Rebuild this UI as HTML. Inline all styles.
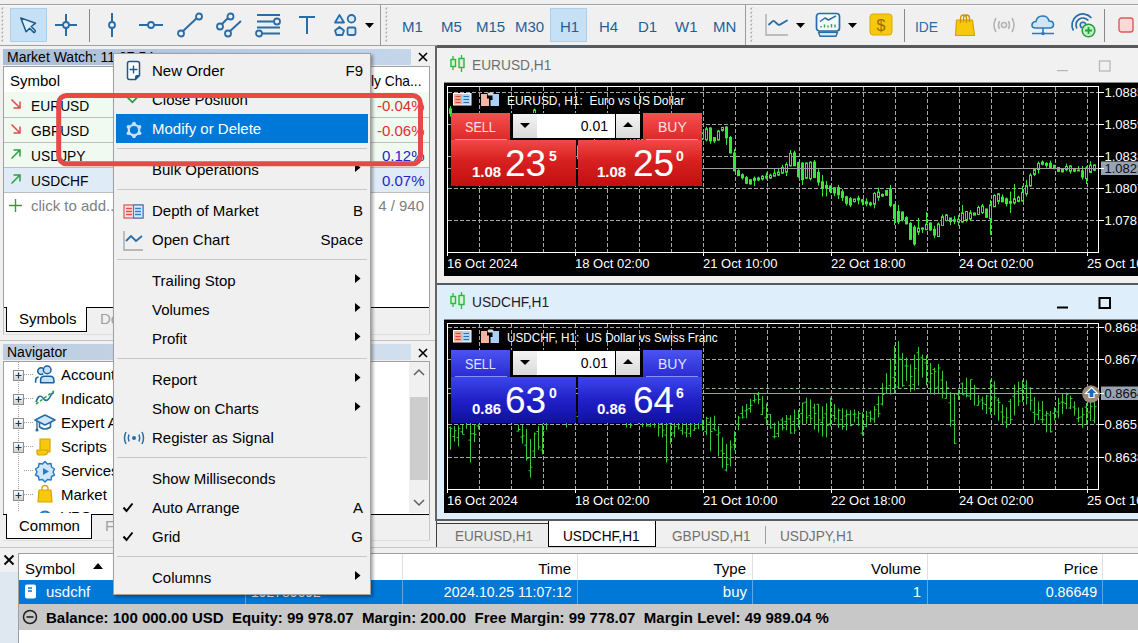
<!DOCTYPE html>
<html><head><meta charset="utf-8"><style>
html,body{margin:0;padding:0;width:1138px;height:643px;overflow:hidden;background:#f0f0f0;font-family:"Liberation Sans", sans-serif;}
.r{position:absolute;}
.t{position:absolute;white-space:nowrap;font-family:"Liberation Sans", sans-serif;}
svg.r{overflow:visible;}
</style></head><body>
<div class="r" style="left:0px;top:0px;width:1138px;height:46px;background:#f0f0f0"></div>
<div class="r" style="left:0px;top:4px;width:1138px;height:1px;background:#a0a0a0"></div>
<div class="r" style="left:0px;top:5px;width:1138px;height:1px;background:#fafafa"></div>
<div class="r" style="left:0px;top:45px;width:437px;height:1px;background:#a0a0a0"></div>
<div class="r" style="left:437px;top:45px;width:701px;height:2px;background:#5a5a5a"></div>
<svg class="r" style="left:1px;top:7px;" width="3" height="36" viewBox="0 0 3 36"><rect x="0.5" y="1" width="1.5" height="1.5" fill="#a8a8a8"/><rect x="1.5" y="0" width="1" height="1" fill="#c8c8c8"/><rect x="0.5" y="5" width="1.5" height="1.5" fill="#a8a8a8"/><rect x="1.5" y="4" width="1" height="1" fill="#c8c8c8"/><rect x="0.5" y="9" width="1.5" height="1.5" fill="#a8a8a8"/><rect x="1.5" y="8" width="1" height="1" fill="#c8c8c8"/><rect x="0.5" y="13" width="1.5" height="1.5" fill="#a8a8a8"/><rect x="1.5" y="12" width="1" height="1" fill="#c8c8c8"/><rect x="0.5" y="17" width="1.5" height="1.5" fill="#a8a8a8"/><rect x="1.5" y="16" width="1" height="1" fill="#c8c8c8"/><rect x="0.5" y="21" width="1.5" height="1.5" fill="#a8a8a8"/><rect x="1.5" y="20" width="1" height="1" fill="#c8c8c8"/><rect x="0.5" y="25" width="1.5" height="1.5" fill="#a8a8a8"/><rect x="1.5" y="24" width="1" height="1" fill="#c8c8c8"/><rect x="0.5" y="29" width="1.5" height="1.5" fill="#a8a8a8"/><rect x="1.5" y="28" width="1" height="1" fill="#c8c8c8"/><rect x="0.5" y="33" width="1.5" height="1.5" fill="#a8a8a8"/><rect x="1.5" y="32" width="1" height="1" fill="#c8c8c8"/></svg>
<svg class="r" style="left:385px;top:7px;" width="3" height="36" viewBox="0 0 3 36"><rect x="0.5" y="1" width="1.5" height="1.5" fill="#a8a8a8"/><rect x="1.5" y="0" width="1" height="1" fill="#c8c8c8"/><rect x="0.5" y="5" width="1.5" height="1.5" fill="#a8a8a8"/><rect x="1.5" y="4" width="1" height="1" fill="#c8c8c8"/><rect x="0.5" y="9" width="1.5" height="1.5" fill="#a8a8a8"/><rect x="1.5" y="8" width="1" height="1" fill="#c8c8c8"/><rect x="0.5" y="13" width="1.5" height="1.5" fill="#a8a8a8"/><rect x="1.5" y="12" width="1" height="1" fill="#c8c8c8"/><rect x="0.5" y="17" width="1.5" height="1.5" fill="#a8a8a8"/><rect x="1.5" y="16" width="1" height="1" fill="#c8c8c8"/><rect x="0.5" y="21" width="1.5" height="1.5" fill="#a8a8a8"/><rect x="1.5" y="20" width="1" height="1" fill="#c8c8c8"/><rect x="0.5" y="25" width="1.5" height="1.5" fill="#a8a8a8"/><rect x="1.5" y="24" width="1" height="1" fill="#c8c8c8"/><rect x="0.5" y="29" width="1.5" height="1.5" fill="#a8a8a8"/><rect x="1.5" y="28" width="1" height="1" fill="#c8c8c8"/><rect x="0.5" y="33" width="1.5" height="1.5" fill="#a8a8a8"/><rect x="1.5" y="32" width="1" height="1" fill="#c8c8c8"/></svg>
<svg class="r" style="left:750px;top:7px;" width="3" height="36" viewBox="0 0 3 36"><rect x="0.5" y="1" width="1.5" height="1.5" fill="#a8a8a8"/><rect x="1.5" y="0" width="1" height="1" fill="#c8c8c8"/><rect x="0.5" y="5" width="1.5" height="1.5" fill="#a8a8a8"/><rect x="1.5" y="4" width="1" height="1" fill="#c8c8c8"/><rect x="0.5" y="9" width="1.5" height="1.5" fill="#a8a8a8"/><rect x="1.5" y="8" width="1" height="1" fill="#c8c8c8"/><rect x="0.5" y="13" width="1.5" height="1.5" fill="#a8a8a8"/><rect x="1.5" y="12" width="1" height="1" fill="#c8c8c8"/><rect x="0.5" y="17" width="1.5" height="1.5" fill="#a8a8a8"/><rect x="1.5" y="16" width="1" height="1" fill="#c8c8c8"/><rect x="0.5" y="21" width="1.5" height="1.5" fill="#a8a8a8"/><rect x="1.5" y="20" width="1" height="1" fill="#c8c8c8"/><rect x="0.5" y="25" width="1.5" height="1.5" fill="#a8a8a8"/><rect x="1.5" y="24" width="1" height="1" fill="#c8c8c8"/><rect x="0.5" y="29" width="1.5" height="1.5" fill="#a8a8a8"/><rect x="1.5" y="28" width="1" height="1" fill="#c8c8c8"/><rect x="0.5" y="33" width="1.5" height="1.5" fill="#a8a8a8"/><rect x="1.5" y="32" width="1" height="1" fill="#c8c8c8"/></svg>
<div class="r" style="left:10px;top:8px;width:37px;height:34px;background:#c6e0f6;border:1px solid #a8d0f0;box-sizing:border-box"></div>
<svg class="r" style="left:18px;top:14px;" width="22" height="22" viewBox="0 0 22 22"><path d="M2.8 3.9 L17.5 9.2 L13.3 12.5 L17.2 16.6 Q17.6 17.2 17 17.8 L16.4 18.3 Q15.9 18.6 15.4 18.1 L11.7 14.3 L8.1 17.8 Z" fill="#d8f0ff" stroke="#1e5888" stroke-width="1.5" stroke-linejoin="round"/></svg>
<svg class="r" style="left:54px;top:13px;" width="24" height="24" viewBox="0 0 24 24"><path d="M12 1 V9 M12 15 V23 M1 12 H9 M15 12 H23" stroke="#2a6ca6" stroke-width="2"/><circle cx="12" cy="12" r="3" fill="#d8ecfb" stroke="#2a6ca6" stroke-width="1.8"/></svg>
<div class="r" style="left:89px;top:9px;width:1px;height:33px;background:#888"></div>
<svg class="r" style="left:104px;top:12px;" width="16" height="26" viewBox="0 0 16 26"><path d="M8 1 V25" stroke="#2a6ca6" stroke-width="2"/><circle cx="8" cy="13" r="3" fill="#e8f2fb" stroke="#2a6ca6" stroke-width="1.8"/></svg>
<svg class="r" style="left:138px;top:17px;" width="26" height="16" viewBox="0 0 26 16"><path d="M1 8 H25" stroke="#2a6ca6" stroke-width="2"/><circle cx="13" cy="8" r="3" fill="#e8f2fb" stroke="#2a6ca6" stroke-width="1.8"/></svg>
<svg class="r" style="left:176px;top:11px;" width="28" height="28" viewBox="0 0 28 28"><path d="M5 22 L23 5" stroke="#2a6ca6" stroke-width="2"/><circle cx="5" cy="22.5" r="3" fill="#e8f2fb" stroke="#2a6ca6" stroke-width="1.8"/><circle cx="23" cy="5.5" r="3" fill="#e8f2fb" stroke="#2a6ca6" stroke-width="1.8"/></svg>
<svg class="r" style="left:214px;top:11px;" width="30" height="28" viewBox="0 0 30 28"><path d="M6 15 L16 5 M14 22 L27 10" stroke="#2a6ca6" stroke-width="2"/><circle cx="6" cy="15.5" r="3" fill="#e8f2fb" stroke="#2a6ca6" stroke-width="1.8"/><circle cx="16.5" cy="5.5" r="3" fill="#e8f2fb" stroke="#2a6ca6" stroke-width="1.8"/><circle cx="14" cy="22.5" r="3" fill="#e8f2fb" stroke="#2a6ca6" stroke-width="1.8"/></svg>
<svg class="r" style="left:254px;top:11px;" width="30" height="28" viewBox="0 0 30 28"><path d="M3 4 H26 M3 10.5 H22 M3 16.5 H26 M8 22.5 H26" stroke="#2a6ca6" stroke-width="2"/><circle cx="23" cy="10.5" r="3" fill="#e8f2fb" stroke="#2a6ca6" stroke-width="1.8"/><circle cx="5" cy="22.5" r="3" fill="#e8f2fb" stroke="#2a6ca6" stroke-width="1.8"/></svg>
<svg class="r" style="left:297px;top:14px;" width="20" height="22" viewBox="0 0 20 22"><path d="M2 3 H18 M10 3 V20" stroke="#2a6ca6" stroke-width="2"/></svg>
<svg class="r" style="left:332px;top:12px;" width="28" height="26" viewBox="0 0 28 26"><path d="M7.5 3 L12 10.5 H3 Z" fill="#d8ecfb" stroke="#2a6ca6" stroke-width="1.8" stroke-linejoin="round"/><circle cx="19.5" cy="6.8" r="3.8" fill="#d8ecfb" stroke="#2a6ca6" stroke-width="1.8"/><path d="M7.5 15 L12 18.5 L10.5 23 H4.5 L3 18.5 Z" fill="#d8ecfb" stroke="#2a6ca6" stroke-width="1.8" stroke-linejoin="round"/><rect x="15.5" y="15.5" width="8" height="7.5" rx="1.5" fill="#d8ecfb" stroke="#2a6ca6" stroke-width="1.8"/></svg>
<svg class="r" style="left:365px;top:23px;" width="10" height="6" viewBox="0 0 10 6"><path d="M0 0 H9 L4.5 5 Z" fill="#000"/></svg>
<div class="r" style="left:380px;top:5px;width:1px;height:40px;background:#9a9a9a"></div>
<div class="r" style="left:550px;top:8px;width:37px;height:34px;background:#c6e0f6;border:1px solid #a8d0f0;box-sizing:border-box"></div>
<div class="t" style="left:402px;top:19.00px;font-size:15px;line-height:15px;color:#1f5f99;font-weight:normal;">M1</div>
<div class="t" style="left:441px;top:19.00px;font-size:15px;line-height:15px;color:#1f5f99;font-weight:normal;">M5</div>
<div class="t" style="left:476px;top:19.00px;font-size:15px;line-height:15px;color:#1f5f99;font-weight:normal;">M15</div>
<div class="t" style="left:515px;top:19.00px;font-size:15px;line-height:15px;color:#1f5f99;font-weight:normal;">M30</div>
<div class="t" style="left:560px;top:19.00px;font-size:15px;line-height:15px;color:#1f5f99;font-weight:normal;">H1</div>
<div class="t" style="left:599px;top:19.00px;font-size:15px;line-height:15px;color:#1f5f99;font-weight:normal;">H4</div>
<div class="t" style="left:638px;top:19.00px;font-size:15px;line-height:15px;color:#1f5f99;font-weight:normal;">D1</div>
<div class="t" style="left:675px;top:19.00px;font-size:15px;line-height:15px;color:#1f5f99;font-weight:normal;">W1</div>
<div class="t" style="left:713px;top:19.00px;font-size:15px;line-height:15px;color:#1f5f99;font-weight:normal;">MN</div>
<div class="r" style="left:745px;top:5px;width:1px;height:40px;background:#9a9a9a"></div>
<svg class="r" style="left:764px;top:13px;" width="26" height="25" viewBox="0 0 26 25"><path d="M2 1 V22 H24" stroke="#bcbcbc" stroke-width="1.8" fill="none"/><path d="M5 11.5 L8.5 8.3 Q9.5 7.5 10.5 8.3 L14 11.5 Q15 12.3 16 11.6 L23 7.5" stroke="#2a6ca6" stroke-width="1.8" fill="none" stroke-linecap="round" stroke-linejoin="round"/></svg>
<svg class="r" style="left:796px;top:23px;" width="10" height="6" viewBox="0 0 10 6"><path d="M0 0 H9 L4.5 5 Z" fill="#000"/></svg>
<svg class="r" style="left:815px;top:12px;" width="27" height="26" viewBox="0 0 27 26"><rect x="1.5" y="1.5" width="23" height="17.5" rx="3" fill="#f2f8fd" stroke="#2a6ca6" stroke-width="1.7"/><path d="M5 9.5 L10 6 L13.5 8 L21 3.8" stroke="#2a6ca6" stroke-width="1.5" fill="none" stroke-linejoin="round"/><path d="M6 15.5 V14 M9.5 15.5 V12.5 M13 15.5 V13.5 M16.5 15.5 V12 M20 15.5 V12.5" stroke="#3aa04a" stroke-width="1.4"/><path d="M3.5 20.3 H22.5 L21 24.3 H5 Z" fill="#d4e8f8" stroke="#2a6ca6" stroke-width="1.4" stroke-linejoin="round"/></svg>
<svg class="r" style="left:848px;top:23px;" width="10" height="6" viewBox="0 0 10 6"><path d="M0 0 H9 L4.5 5 Z" fill="#000"/></svg>
<svg class="r" style="left:869px;top:13px;" width="24" height="23" viewBox="0 0 24 23"><rect x="1" y="1" width="22" height="21" rx="3" fill="#f6c80e" stroke="#e0a800" stroke-width="1"/><text x="12" y="17.5" font-family="Liberation Sans" font-size="16" text-anchor="middle" fill="#9a6a00">$</text></svg>
<div class="r" style="left:904px;top:9px;width:1px;height:33px;background:#888"></div>
<div class="t" style="left:915px;top:18.80px;font-size:15px;line-height:15px;color:#2a6ca6;font-weight:normal;transform:scaleX(0.92);transform-origin:0 0;">IDE</div>
<svg class="r" style="left:954px;top:13px;" width="24" height="24" viewBox="0 0 24 24"><path d="M2.5 7 H18.5 L20.5 22.5 H1.5 Z" fill="#f6c80e" stroke="#d8a200" stroke-width="1.2" stroke-linejoin="round"/><path d="M6.5 10 V5.5 Q6.5 2 9.5 2 Q12.5 2 12.5 5.5 V10 M9.5 9 V5.5 Q9.5 2 12.5 2 Q15.5 2 15.5 5.5 V9" stroke="#c89400" stroke-width="1.3" fill="none"/></svg>
<svg class="r" style="left:991px;top:16px;" width="26" height="18" viewBox="0 0 26 18"><path d="M5 2 Q1 9 5 16 M21 2 Q25 9 21 16 M8.5 5 Q6.5 9 8.5 13 M17.5 5 Q19.5 9 17.5 13" stroke="#b5b5b5" stroke-width="1.6" fill="none"/><circle cx="13" cy="9" r="2.5" fill="none" stroke="#b5b5b5" stroke-width="1.6"/></svg>
<svg class="r" style="left:1030px;top:14px;" width="26" height="22" viewBox="0 0 26 22"><path d="M6 14 Q1.5 14 2 10.5 Q2.5 7.5 6 7.5 Q7 2 12.5 2 Q18 2 19 7 Q23.5 7 23.5 10.5 Q23.5 14 19.5 14 Z" fill="#cfe6f8" stroke="#2a7ac0" stroke-width="1.6"/><path d="M13 14 V18.5 M2 19.5 H24" stroke="#2a7ac0" stroke-width="1.6"/><circle cx="13" cy="19.5" r="1.8" fill="#2a7ac0"/></svg>
<svg class="r" style="left:1069px;top:12px;" width="28" height="26" viewBox="0 0 28 26"><path d="M4.47 18.50 A11 11 0 0 1 22.43 5.93 M7.94 16.50 A7 7 0 0 1 19.36 8.50" stroke="#2a6ca6" stroke-width="1.7" fill="none"/><circle cx="14" cy="13" r="2.8" fill="#cfe6f8" stroke="#2a6ca6" stroke-width="1.5"/><circle cx="19.5" cy="18.5" r="6.3" fill="#c8f0c8" stroke="#22a03a" stroke-width="1.6"/><path d="M19.5 15 V22 M16 18.5 H23" stroke="#22a03a" stroke-width="1.8"/></svg>
<div class="r" style="left:1104px;top:9px;width:1px;height:33px;background:#888"></div>
<svg class="r" style="left:1118px;top:17px;" width="16" height="16" viewBox="0 0 16 16"><rect x="1" y="1" width="14" height="14" rx="2.5" fill="#fcd8d8" stroke="#e05a5a" stroke-width="1.4"/></svg>
<div class="r" style="left:0px;top:46px;width:437px;height:502px;background:#f0f0f0"></div>
<div class="r" style="left:3px;top:49px;width:408px;height:16px;background:linear-gradient(90deg,#a9bdd6,#c3d6ec)"></div>
<div class="t" style="left:7px;top:50.15px;font-size:14px;line-height:14px;color:#000;font-weight:normal;">Market Watch: 11:07:54</div>
<svg class="r" style="left:418px;top:52px;" width="10" height="10" viewBox="0 0 10 10"><path d="M1 1 L9 9 M9 1 L1 9" stroke="#000" stroke-width="1.6"/></svg>
<div class="r" style="left:3px;top:66px;width:427px;height:242px;background:#fff;border:1px solid #a0a0a0;box-sizing:border-box"></div>
<div class="t" style="left:10px;top:73.30px;font-size:15px;line-height:15px;color:#000;font-weight:normal;">Symbol</div>
<div class="t" style="right:716px;top:73.30px;font-size:15px;line-height:15px;color:#000;font-weight:normal;transform:scaleX(0.92);transform-origin:100% 0;">Daily Cha...</div>
<div class="r" style="left:4px;top:92px;width:425px;height:25px;background:#f0faf0"></div>
<svg class="r" style="left:10px;top:98px;" width="13" height="12" viewBox="0 0 13 12"><path d="M1.5 1.5 L10 10 M3.5 10 H10 V3.5" stroke="#e04a4a" stroke-width="1.5" fill="none"/></svg>
<div class="t" style="left:31px;top:98.30px;font-size:15px;line-height:15px;color:#000;font-weight:normal;transform:scaleX(0.92);transform-origin:0 0;">EURUSD</div>
<div class="t" style="right:713.5px;top:98.30px;font-size:15px;line-height:15px;color:#dc3030;font-weight:normal;">-0.04%</div>
<div class="r" style="left:4px;top:117px;width:425px;height:25px;background:#f0faf0"></div>
<svg class="r" style="left:10px;top:123px;" width="13" height="12" viewBox="0 0 13 12"><path d="M1.5 1.5 L10 10 M3.5 10 H10 V3.5" stroke="#e04a4a" stroke-width="1.5" fill="none"/></svg>
<div class="t" style="left:31px;top:123.30px;font-size:15px;line-height:15px;color:#000;font-weight:normal;transform:scaleX(0.92);transform-origin:0 0;">GBPUSD</div>
<div class="t" style="right:713.5px;top:123.30px;font-size:15px;line-height:15px;color:#dc3030;font-weight:normal;">-0.06%</div>
<div class="r" style="left:4px;top:142px;width:425px;height:25px;background:#f0faf0"></div>
<svg class="r" style="left:10px;top:148px;" width="13" height="12" viewBox="0 0 13 12"><path d="M1.5 10.5 L10 2 M3.5 2 H10 V8.5" stroke="#2aa040" stroke-width="1.5" fill="none"/></svg>
<div class="t" style="left:31px;top:148.30px;font-size:15px;line-height:15px;color:#000;font-weight:normal;transform:scaleX(0.92);transform-origin:0 0;">USDJPY</div>
<div class="t" style="right:713.5px;top:148.30px;font-size:15px;line-height:15px;color:#2424c8;font-weight:normal;">0.12%</div>
<div class="r" style="left:4px;top:167px;width:425px;height:25px;background:#e0ebf8"></div>
<svg class="r" style="left:10px;top:173px;" width="13" height="12" viewBox="0 0 13 12"><path d="M1.5 10.5 L10 2 M3.5 2 H10 V8.5" stroke="#2aa040" stroke-width="1.5" fill="none"/></svg>
<div class="t" style="left:31px;top:173.30px;font-size:15px;line-height:15px;color:#000;font-weight:normal;transform:scaleX(0.92);transform-origin:0 0;">USDCHF</div>
<div class="t" style="right:713.5px;top:173.30px;font-size:15px;line-height:15px;color:#2424c8;font-weight:normal;">0.07%</div>
<div class="r" style="left:4px;top:117px;width:425px;height:1px;background:#bdbdbd"></div>
<div class="r" style="left:4px;top:142px;width:425px;height:1px;background:#bdbdbd"></div>
<div class="r" style="left:4px;top:167px;width:425px;height:1px;background:#bdbdbd"></div>
<div class="r" style="left:4px;top:192px;width:425px;height:1px;background:#bdbdbd"></div>
<svg class="r" style="left:8px;top:198px;" width="15" height="15" viewBox="0 0 15 15"><path d="M7.5 1 V14 M1 7.5 H14" stroke="#2aa040" stroke-width="1.4"/></svg>
<div class="t" style="left:31px;top:198.30px;font-size:15px;line-height:15px;color:#808080;font-weight:normal;">click to add...</div>
<div class="t" style="right:714px;top:198.30px;font-size:15px;line-height:15px;color:#808080;font-weight:normal;">4 / 940</div>
<div class="r" style="left:3px;top:307px;width:427px;height:1px;background:#000"></div>
<div class="r" style="left:6px;top:307px;width:81px;height:25px;background:#fff;border:1px solid #000;border-top:none;box-sizing:border-box"></div>
<div class="t" style="left:19px;top:311.30px;font-size:15px;line-height:15px;color:#000;font-weight:normal;">Symbols</div>
<div class="t" style="left:100px;top:311.30px;font-size:15px;line-height:15px;color:#a0a0a0;font-weight:normal;">Details</div>
<div class="r" style="left:3px;top:307px;width:1px;height:28px;background:#c0c0c0"></div>
<div class="r" style="left:429px;top:307px;width:1px;height:28px;background:#c8c8c8"></div>
<div class="r" style="left:3px;top:334px;width:427px;height:1px;background:#dedede"></div>
<div class="r" style="left:0px;top:340px;width:435px;height:1px;background:#c4c4c4"></div>
<div class="r" style="left:3px;top:344px;width:408px;height:16px;background:linear-gradient(90deg,#bccde0,#d2dfee)"></div>
<div class="t" style="left:7px;top:345.15px;font-size:14px;line-height:14px;color:#000;font-weight:normal;">Navigator</div>
<svg class="r" style="left:418px;top:348px;" width="10" height="10" viewBox="0 0 10 10"><path d="M1 1 L9 9 M9 1 L1 9" stroke="#000" stroke-width="1.6"/></svg>
<div class="r" style="left:3px;top:361px;width:427px;height:153px;background:#fff;border:1px solid #a0a0a0;border-bottom:none;box-sizing:border-box"></div>
<div class="r" style="left:409px;top:362px;width:20px;height:151px;background:#f0f0f0"></div>
<div class="r" style="left:410px;top:397px;width:18px;height:83px;background:#cdcdcd"></div>
<svg class="r" style="left:413px;top:368px;" width="12" height="8" viewBox="0 0 12 8"><path d="M1 7 L6 2 L11 7" stroke="#606060" stroke-width="1.5" fill="none"/></svg>
<svg class="r" style="left:413px;top:499px;" width="12" height="8" viewBox="0 0 12 8"><path d="M1 1 L6 6 L11 1" stroke="#606060" stroke-width="1.5" fill="none"/></svg>
<svg class="r" style="left:13px;top:362px;" width="40" height="150" viewBox="0 0 40 150"><rect x="5" y="0" width="1" height="1" fill="#a0a0a0"/><rect x="5" y="2" width="1" height="1" fill="#a0a0a0"/><rect x="5" y="4" width="1" height="1" fill="#a0a0a0"/><rect x="5" y="6" width="1" height="1" fill="#a0a0a0"/><rect x="5" y="8" width="1" height="1" fill="#a0a0a0"/><rect x="5" y="10" width="1" height="1" fill="#a0a0a0"/><rect x="5" y="12" width="1" height="1" fill="#a0a0a0"/><rect x="5" y="14" width="1" height="1" fill="#a0a0a0"/><rect x="5" y="16" width="1" height="1" fill="#a0a0a0"/><rect x="5" y="18" width="1" height="1" fill="#a0a0a0"/><rect x="5" y="20" width="1" height="1" fill="#a0a0a0"/><rect x="5" y="22" width="1" height="1" fill="#a0a0a0"/><rect x="5" y="24" width="1" height="1" fill="#a0a0a0"/><rect x="5" y="26" width="1" height="1" fill="#a0a0a0"/><rect x="5" y="28" width="1" height="1" fill="#a0a0a0"/><rect x="5" y="30" width="1" height="1" fill="#a0a0a0"/><rect x="5" y="32" width="1" height="1" fill="#a0a0a0"/><rect x="5" y="34" width="1" height="1" fill="#a0a0a0"/><rect x="5" y="36" width="1" height="1" fill="#a0a0a0"/><rect x="5" y="38" width="1" height="1" fill="#a0a0a0"/><rect x="5" y="40" width="1" height="1" fill="#a0a0a0"/><rect x="5" y="42" width="1" height="1" fill="#a0a0a0"/><rect x="5" y="44" width="1" height="1" fill="#a0a0a0"/><rect x="5" y="46" width="1" height="1" fill="#a0a0a0"/><rect x="5" y="48" width="1" height="1" fill="#a0a0a0"/><rect x="5" y="50" width="1" height="1" fill="#a0a0a0"/><rect x="5" y="52" width="1" height="1" fill="#a0a0a0"/><rect x="5" y="54" width="1" height="1" fill="#a0a0a0"/><rect x="5" y="56" width="1" height="1" fill="#a0a0a0"/><rect x="5" y="58" width="1" height="1" fill="#a0a0a0"/><rect x="5" y="60" width="1" height="1" fill="#a0a0a0"/><rect x="5" y="62" width="1" height="1" fill="#a0a0a0"/><rect x="5" y="64" width="1" height="1" fill="#a0a0a0"/><rect x="5" y="66" width="1" height="1" fill="#a0a0a0"/><rect x="5" y="68" width="1" height="1" fill="#a0a0a0"/><rect x="5" y="70" width="1" height="1" fill="#a0a0a0"/><rect x="5" y="72" width="1" height="1" fill="#a0a0a0"/><rect x="5" y="74" width="1" height="1" fill="#a0a0a0"/><rect x="5" y="76" width="1" height="1" fill="#a0a0a0"/><rect x="5" y="78" width="1" height="1" fill="#a0a0a0"/><rect x="5" y="80" width="1" height="1" fill="#a0a0a0"/><rect x="5" y="82" width="1" height="1" fill="#a0a0a0"/><rect x="5" y="84" width="1" height="1" fill="#a0a0a0"/><rect x="5" y="86" width="1" height="1" fill="#a0a0a0"/><rect x="5" y="88" width="1" height="1" fill="#a0a0a0"/><rect x="5" y="90" width="1" height="1" fill="#a0a0a0"/><rect x="5" y="92" width="1" height="1" fill="#a0a0a0"/><rect x="5" y="94" width="1" height="1" fill="#a0a0a0"/><rect x="5" y="96" width="1" height="1" fill="#a0a0a0"/><rect x="5" y="98" width="1" height="1" fill="#a0a0a0"/><rect x="5" y="100" width="1" height="1" fill="#a0a0a0"/><rect x="5" y="102" width="1" height="1" fill="#a0a0a0"/><rect x="5" y="104" width="1" height="1" fill="#a0a0a0"/><rect x="5" y="106" width="1" height="1" fill="#a0a0a0"/><rect x="5" y="108" width="1" height="1" fill="#a0a0a0"/><rect x="5" y="110" width="1" height="1" fill="#a0a0a0"/><rect x="5" y="112" width="1" height="1" fill="#a0a0a0"/><rect x="5" y="114" width="1" height="1" fill="#a0a0a0"/><rect x="5" y="116" width="1" height="1" fill="#a0a0a0"/><rect x="5" y="118" width="1" height="1" fill="#a0a0a0"/><rect x="5" y="120" width="1" height="1" fill="#a0a0a0"/><rect x="5" y="122" width="1" height="1" fill="#a0a0a0"/><rect x="5" y="124" width="1" height="1" fill="#a0a0a0"/><rect x="5" y="126" width="1" height="1" fill="#a0a0a0"/><rect x="5" y="128" width="1" height="1" fill="#a0a0a0"/><rect x="5" y="130" width="1" height="1" fill="#a0a0a0"/><rect x="5" y="132" width="1" height="1" fill="#a0a0a0"/><rect x="5" y="134" width="1" height="1" fill="#a0a0a0"/><rect x="5" y="136" width="1" height="1" fill="#a0a0a0"/><rect x="5" y="138" width="1" height="1" fill="#a0a0a0"/><rect x="5" y="140" width="1" height="1" fill="#a0a0a0"/><rect x="5" y="142" width="1" height="1" fill="#a0a0a0"/><rect x="5" y="144" width="1" height="1" fill="#a0a0a0"/><rect x="5" y="146" width="1" height="1" fill="#a0a0a0"/><rect x="5" y="148" width="1" height="1" fill="#a0a0a0"/></svg>
<div class="r" style="left:13px;top:369.5px;width:11px;height:11px;background:linear-gradient(180deg,#fafafa,#d4d4d4);border:1px solid #8c8c8c;box-sizing:border-box"></div>
<svg class="r" style="left:13px;top:369.5px;" width="11" height="11" viewBox="0 0 11 11"><path d="M2.5 5.5 H8.5 M5.5 2.5 V8.5" stroke="#1a3a6a" stroke-width="1.2"/></svg>
<svg class="r" style="left:24px;top:374px;" width="10" height="1" viewBox="0 0 10 1"><rect x="0" y="0" width="1" height="1" fill="#a0a0a0"/><rect x="2" y="0" width="1" height="1" fill="#a0a0a0"/><rect x="4" y="0" width="1" height="1" fill="#a0a0a0"/><rect x="6" y="0" width="1" height="1" fill="#a0a0a0"/><rect x="8" y="0" width="1" height="1" fill="#a0a0a0"/></svg>
<div class="t" style="left:61px;top:367.30px;font-size:15px;line-height:15px;color:#000;font-weight:normal;">Accounts</div>
<div class="r" style="left:13px;top:393.5px;width:11px;height:11px;background:linear-gradient(180deg,#fafafa,#d4d4d4);border:1px solid #8c8c8c;box-sizing:border-box"></div>
<svg class="r" style="left:13px;top:393.5px;" width="11" height="11" viewBox="0 0 11 11"><path d="M2.5 5.5 H8.5 M5.5 2.5 V8.5" stroke="#1a3a6a" stroke-width="1.2"/></svg>
<svg class="r" style="left:24px;top:398px;" width="10" height="1" viewBox="0 0 10 1"><rect x="0" y="0" width="1" height="1" fill="#a0a0a0"/><rect x="2" y="0" width="1" height="1" fill="#a0a0a0"/><rect x="4" y="0" width="1" height="1" fill="#a0a0a0"/><rect x="6" y="0" width="1" height="1" fill="#a0a0a0"/><rect x="8" y="0" width="1" height="1" fill="#a0a0a0"/></svg>
<div class="t" style="left:61px;top:391.30px;font-size:15px;line-height:15px;color:#000;font-weight:normal;">Indicators</div>
<div class="r" style="left:13px;top:417.5px;width:11px;height:11px;background:linear-gradient(180deg,#fafafa,#d4d4d4);border:1px solid #8c8c8c;box-sizing:border-box"></div>
<svg class="r" style="left:13px;top:417.5px;" width="11" height="11" viewBox="0 0 11 11"><path d="M2.5 5.5 H8.5 M5.5 2.5 V8.5" stroke="#1a3a6a" stroke-width="1.2"/></svg>
<svg class="r" style="left:24px;top:422px;" width="10" height="1" viewBox="0 0 10 1"><rect x="0" y="0" width="1" height="1" fill="#a0a0a0"/><rect x="2" y="0" width="1" height="1" fill="#a0a0a0"/><rect x="4" y="0" width="1" height="1" fill="#a0a0a0"/><rect x="6" y="0" width="1" height="1" fill="#a0a0a0"/><rect x="8" y="0" width="1" height="1" fill="#a0a0a0"/></svg>
<div class="t" style="left:61px;top:415.30px;font-size:15px;line-height:15px;color:#000;font-weight:normal;">Expert Advisors</div>
<div class="r" style="left:13px;top:441.5px;width:11px;height:11px;background:linear-gradient(180deg,#fafafa,#d4d4d4);border:1px solid #8c8c8c;box-sizing:border-box"></div>
<svg class="r" style="left:13px;top:441.5px;" width="11" height="11" viewBox="0 0 11 11"><path d="M2.5 5.5 H8.5 M5.5 2.5 V8.5" stroke="#1a3a6a" stroke-width="1.2"/></svg>
<svg class="r" style="left:24px;top:446px;" width="10" height="1" viewBox="0 0 10 1"><rect x="0" y="0" width="1" height="1" fill="#a0a0a0"/><rect x="2" y="0" width="1" height="1" fill="#a0a0a0"/><rect x="4" y="0" width="1" height="1" fill="#a0a0a0"/><rect x="6" y="0" width="1" height="1" fill="#a0a0a0"/><rect x="8" y="0" width="1" height="1" fill="#a0a0a0"/></svg>
<div class="t" style="left:61px;top:439.30px;font-size:15px;line-height:15px;color:#000;font-weight:normal;">Scripts</div>
<svg class="r" style="left:24px;top:470px;" width="10" height="1" viewBox="0 0 10 1"><rect x="0" y="0" width="1" height="1" fill="#a0a0a0"/><rect x="2" y="0" width="1" height="1" fill="#a0a0a0"/><rect x="4" y="0" width="1" height="1" fill="#a0a0a0"/><rect x="6" y="0" width="1" height="1" fill="#a0a0a0"/><rect x="8" y="0" width="1" height="1" fill="#a0a0a0"/></svg>
<div class="t" style="left:61px;top:463.30px;font-size:15px;line-height:15px;color:#000;font-weight:normal;">Services</div>
<div class="r" style="left:13px;top:489.5px;width:11px;height:11px;background:linear-gradient(180deg,#fafafa,#d4d4d4);border:1px solid #8c8c8c;box-sizing:border-box"></div>
<svg class="r" style="left:13px;top:489.5px;" width="11" height="11" viewBox="0 0 11 11"><path d="M2.5 5.5 H8.5 M5.5 2.5 V8.5" stroke="#1a3a6a" stroke-width="1.2"/></svg>
<svg class="r" style="left:24px;top:494px;" width="10" height="1" viewBox="0 0 10 1"><rect x="0" y="0" width="1" height="1" fill="#a0a0a0"/><rect x="2" y="0" width="1" height="1" fill="#a0a0a0"/><rect x="4" y="0" width="1" height="1" fill="#a0a0a0"/><rect x="6" y="0" width="1" height="1" fill="#a0a0a0"/><rect x="8" y="0" width="1" height="1" fill="#a0a0a0"/></svg>
<div class="t" style="left:61px;top:487.30px;font-size:15px;line-height:15px;color:#000;font-weight:normal;">Market</div>
<div class="r" style="left:13px;top:513.5px;width:11px;height:11px;background:linear-gradient(180deg,#fafafa,#d4d4d4);border:1px solid #8c8c8c;box-sizing:border-box"></div>
<svg class="r" style="left:13px;top:513.5px;" width="11" height="11" viewBox="0 0 11 11"><path d="M2.5 5.5 H8.5 M5.5 2.5 V8.5" stroke="#1a3a6a" stroke-width="1.2"/></svg>
<svg class="r" style="left:24px;top:518px;" width="10" height="1" viewBox="0 0 10 1"><rect x="0" y="0" width="1" height="1" fill="#a0a0a0"/><rect x="2" y="0" width="1" height="1" fill="#a0a0a0"/><rect x="4" y="0" width="1" height="1" fill="#a0a0a0"/><rect x="6" y="0" width="1" height="1" fill="#a0a0a0"/><rect x="8" y="0" width="1" height="1" fill="#a0a0a0"/></svg>
<div class="t" style="left:61px;top:511.30px;font-size:15px;line-height:15px;color:#000;font-weight:normal;">VPS</div>
<svg class="r" style="left:34px;top:364px;" width="22" height="22" viewBox="0 0 22 22"><path d="M9.2 9.6 A3.3 3.3 0 1 1 9.6 5" fill="#c4e2fa" stroke="#1e5e98" stroke-width="1.5"/><path d="M1.6 18.8 V16.5 Q1.6 13.3 4.6 13" fill="none" stroke="#1e5e98" stroke-width="1.5"/><circle cx="13.2" cy="5.9" r="3.8" fill="#c4e2fa" stroke="#1e5e98" stroke-width="1.5"/><path d="M6.6 18.8 V16 Q6.6 12.2 10.5 12.2 H16 Q19.9 12.2 19.9 16 V18.8 Z" fill="#c4e2fa" stroke="#1e5e98" stroke-width="1.5" stroke-linejoin="round"/></svg>
<svg class="r" style="left:34px;top:389px;" width="22" height="18" viewBox="0 0 22 18"><path d="M2 13 Q5 4 9 9 Q13 15 17 6 Q18.5 3.5 20 4" stroke="#2a6ca6" stroke-width="1.6" fill="none"/><path d="M2 15 L20 2" stroke="#30b040" stroke-width="1.6" stroke-dasharray="3 2" fill="none"/></svg>
<svg class="r" style="left:34px;top:412px;" width="22" height="22" viewBox="0 0 22 22"><path d="M1 8 L11 3 L21 8 L11 13 Z" fill="#d0e7fa" stroke="#2a6ca6" stroke-width="1.6" stroke-linejoin="round"/><path d="M5.5 10 V15 Q11 19 16.5 15 V10" fill="none" stroke="#2a6ca6" stroke-width="1.6"/><path d="M3 9 V17" stroke="#2a6ca6" stroke-width="1.4"/><circle cx="3" cy="18" r="1.6" fill="#2a6ca6"/></svg>
<svg class="r" style="left:34px;top:436px;" width="22" height="22" viewBox="0 0 22 22"><path d="M6 3 H16 V16 H6 Z" fill="#f6c80e" stroke="#d9a400" stroke-width="1.2"/><path d="M3 14 H14 Q14 19 10 19 H5 Q3 19 3 16.5 Z" fill="#f6c80e" stroke="#d9a400" stroke-width="1.2"/></svg>
<svg class="r" style="left:34px;top:460px;" width="22" height="22" viewBox="0 0 22 22"><path d="M11 1.5 L13.5 4 L17 3.5 L17.5 7 L20.5 9 L19 12 L20.5 15 L17.5 16.5 L17 20 L13.5 19.5 L11 22 L8.5 19.5 L5 20 L4.5 16.5 L1.5 15 L3 12 L1.5 9 L4.5 7 L5 3.5 L8.5 4 Z" fill="#d0e7fa" stroke="#2a7ac0" stroke-width="1.5" stroke-linejoin="round"/><path d="M9 8 L15 11.5 L9 15 Z" fill="#2a7ac0"/></svg>
<svg class="r" style="left:36px;top:484px;" width="18" height="20" viewBox="0 0 18 20"><path d="M6 7 V4.5 Q6 1.5 9 1.5 Q12 1.5 12 4.5 V7" stroke="#d9a400" stroke-width="1.4" fill="none"/><path d="M3 6 H15 L16 18 H2 Z" fill="#f6c80e" stroke="#d9a400" stroke-width="1.2" stroke-linejoin="round"/></svg>
<svg class="r" style="left:34px;top:507px;overflow:hidden" width="22" height="6" viewBox="0 0 22 6"><path d="M4 9 Q11 0 18 9" stroke="#2a7ac0" stroke-width="1.8" fill="#d0e7fa"/></svg>
<div class="r" style="left:55px;top:500px;width:60px;height:13px;overflow:hidden"><div class="t" style="left:6px;top:9.3px;font-size:15px;line-height:15px;color:#000">VPS</div></div>
<div class="r" style="left:3px;top:514px;width:427px;height:1px;background:#000"></div>
<div class="r" style="left:6px;top:514px;width:86px;height:25px;background:#fff;border:1px solid #000;border-top:none;box-sizing:border-box"></div>
<div class="t" style="left:19px;top:518.30px;font-size:15px;line-height:15px;color:#000;font-weight:normal;">Common</div>
<div class="r" style="left:429px;top:514px;width:1px;height:27px;background:#c8c8c8"></div>
<div class="r" style="left:3px;top:540px;width:427px;height:1px;background:#dedede"></div>
<div class="t" style="left:105px;top:518.30px;font-size:15px;line-height:15px;color:#a0a0a0;font-weight:normal;">Favorites</div>
<div class="r" style="left:437px;top:46px;width:701px;height:502px;background:#f0f0f0"></div>
<div class="r" style="left:437px;top:47px;width:701px;height:36px;background:#f1f1f1"></div>
<div class="r" style="left:437px;top:46px;width:701px;height:2px;background:#545a5e"></div>
<div class="r" style="left:444px;top:82px;width:694px;height:1px;background:#80868a"></div>
<div class="r" style="left:437px;top:83px;width:7px;height:193px;background:#f1f1f1"></div>
<svg class="r" style="left:448px;top:54px;" width="20" height="20" viewBox="0 0 20 20"><path d="M5 2 V16 M13.5 1 V18" stroke="#2ab83a" stroke-width="1.3"/><rect x="3" y="5.5" width="4.5" height="7" fill="#d8f4d8" stroke="#2ab83a" stroke-width="1.4"/><rect x="11" y="4.5" width="5" height="9" fill="#d8f4d8" stroke="#2ab83a" stroke-width="1.4"/></svg>
<div class="t" style="left:472px;top:56.80px;font-size:15px;line-height:15px;color:#6e6e6e;font-weight:normal;transform:scaleX(0.915);transform-origin:0 0;">EURUSD,H1</div>
<svg class="r" style="left:1055px;top:66px;" width="14" height="6" viewBox="0 0 14 6"><path d="M2 4.6 H13" stroke="#b4b4b4" stroke-width="1.2"/></svg>
<svg class="r" style="left:1097px;top:59px;" width="15" height="14" viewBox="0 0 15 14"><rect x="2.5" y="2" width="10.5" height="10" fill="none" stroke="#b4b4b4" stroke-width="1.2"/></svg>
<div class="r" style="left:437px;top:276px;width:701px;height:7px;background:#f1f1f1"></div>
<svg class="r" style="left:444px;top:83px;" width="694" height="193" viewBox="0 0 694 193"><rect x="0" y="0" width="694" height="193" fill="#000"/><path d="M35.5 4V169" stroke="#a8a8a8" stroke-width="1" stroke-dasharray="4 2"/><path d="M67.5 4V169" stroke="#a8a8a8" stroke-width="1" stroke-dasharray="4 2"/><path d="M99.5 4V169" stroke="#a8a8a8" stroke-width="1" stroke-dasharray="4 2"/><path d="M131.5 4V169" stroke="#a8a8a8" stroke-width="1" stroke-dasharray="4 2"/><path d="M163.5 4V169" stroke="#a8a8a8" stroke-width="1" stroke-dasharray="4 2"/><path d="M195.5 4V169" stroke="#a8a8a8" stroke-width="1" stroke-dasharray="4 2"/><path d="M227.5 4V169" stroke="#a8a8a8" stroke-width="1" stroke-dasharray="4 2"/><path d="M259.5 4V169" stroke="#a8a8a8" stroke-width="1" stroke-dasharray="4 2"/><path d="M291.5 4V169" stroke="#a8a8a8" stroke-width="1" stroke-dasharray="4 2"/><path d="M323.5 4V169" stroke="#a8a8a8" stroke-width="1" stroke-dasharray="4 2"/><path d="M355.5 4V169" stroke="#a8a8a8" stroke-width="1" stroke-dasharray="4 2"/><path d="M387.5 4V169" stroke="#a8a8a8" stroke-width="1" stroke-dasharray="4 2"/><path d="M419.5 4V169" stroke="#a8a8a8" stroke-width="1" stroke-dasharray="4 2"/><path d="M451.5 4V169" stroke="#a8a8a8" stroke-width="1" stroke-dasharray="4 2"/><path d="M483.5 4V169" stroke="#a8a8a8" stroke-width="1" stroke-dasharray="4 2"/><path d="M515.5 4V169" stroke="#a8a8a8" stroke-width="1" stroke-dasharray="4 2"/><path d="M547.5 4V169" stroke="#a8a8a8" stroke-width="1" stroke-dasharray="4 2"/><path d="M579.5 4V169" stroke="#a8a8a8" stroke-width="1" stroke-dasharray="4 2"/><path d="M611.5 4V169" stroke="#a8a8a8" stroke-width="1" stroke-dasharray="4 2"/><path d="M643.5 4V169" stroke="#a8a8a8" stroke-width="1" stroke-dasharray="4 2"/><path d="M4 9.5H654" stroke="#a8a8a8" stroke-width="1" stroke-dasharray="4 2"/><path d="M4 41.5H654" stroke="#a8a8a8" stroke-width="1" stroke-dasharray="4 2"/><path d="M4 73.5H654" stroke="#a8a8a8" stroke-width="1" stroke-dasharray="4 2"/><path d="M4 105.5H654" stroke="#a8a8a8" stroke-width="1" stroke-dasharray="4 2"/><path d="M4 137.5H654" stroke="#a8a8a8" stroke-width="1" stroke-dasharray="4 2"/><path d="M6.5 23.0V33.6" stroke="#3ae83a" stroke-width="1"/><rect x="5.5" y="25.9" width="2" height="4.5" fill="#3ae83a" stroke="#3ae83a" stroke-width="1"/><path d="M10.5 66.9V83.7" stroke="#3ae83a" stroke-width="1"/><rect x="9.5" y="67.0" width="2" height="15.0" fill="#3ae83a" stroke="#3ae83a" stroke-width="1"/><path d="M14.5 64.6V82.1" stroke="#3ae83a" stroke-width="1"/><rect x="13.5" y="67.0" width="2" height="15.0" fill="#3ae83a" stroke="#3ae83a" stroke-width="1"/><path d="M18.5 66.8V82.9" stroke="#3ae83a" stroke-width="1"/><rect x="17.5" y="67.0" width="2" height="15.0" fill="#3ae83a" stroke="#3ae83a" stroke-width="1"/><path d="M22.5 65.8V84.0" stroke="#3ae83a" stroke-width="1"/><rect x="21.5" y="67.0" width="2" height="15.0" fill="#000" stroke="#3ae83a" stroke-width="1"/><path d="M26.5 64.6V82.0" stroke="#3ae83a" stroke-width="1"/><rect x="25.5" y="67.0" width="2" height="15.0" fill="#3ae83a" stroke="#3ae83a" stroke-width="1"/><path d="M30.5 66.3V87.3" stroke="#3ae83a" stroke-width="1"/><rect x="29.5" y="67.0" width="2" height="15.0" fill="#3ae83a" stroke="#3ae83a" stroke-width="1"/><path d="M34.5 66.5V82.1" stroke="#3ae83a" stroke-width="1"/><rect x="33.5" y="67.0" width="2" height="15.0" fill="#3ae83a" stroke="#3ae83a" stroke-width="1"/><path d="M38.5 65.0V82.8" stroke="#3ae83a" stroke-width="1"/><rect x="37.5" y="67.0" width="2" height="15.0" fill="#3ae83a" stroke="#3ae83a" stroke-width="1"/><path d="M42.5 66.5V82.3" stroke="#3ae83a" stroke-width="1"/><rect x="41.5" y="67.0" width="2" height="15.0" fill="#000" stroke="#3ae83a" stroke-width="1"/><path d="M46.5 64.6V83.0" stroke="#3ae83a" stroke-width="1"/><rect x="45.5" y="67.0" width="2" height="15.0" fill="#000" stroke="#3ae83a" stroke-width="1"/><path d="M50.5 66.8V83.5" stroke="#3ae83a" stroke-width="1"/><rect x="49.5" y="67.0" width="2" height="15.0" fill="#000" stroke="#3ae83a" stroke-width="1"/><path d="M54.5 66.9V82.4" stroke="#3ae83a" stroke-width="1"/><rect x="53.5" y="67.0" width="2" height="15.0" fill="#000" stroke="#3ae83a" stroke-width="1"/><path d="M58.5 64.0V83.1" stroke="#3ae83a" stroke-width="1"/><rect x="57.5" y="67.0" width="2" height="15.0" fill="#3ae83a" stroke="#3ae83a" stroke-width="1"/><path d="M62.5 62.6V82.2" stroke="#3ae83a" stroke-width="1"/><rect x="61.5" y="67.0" width="2" height="15.0" fill="#000" stroke="#3ae83a" stroke-width="1"/><path d="M66.5 65.3V85.1" stroke="#3ae83a" stroke-width="1"/><rect x="65.5" y="67.0" width="2" height="15.0" fill="#000" stroke="#3ae83a" stroke-width="1"/><path d="M70.5 64.9V82.9" stroke="#3ae83a" stroke-width="1"/><rect x="69.5" y="67.0" width="2" height="15.0" fill="#3ae83a" stroke="#3ae83a" stroke-width="1"/><path d="M74.5 66.1V83.6" stroke="#3ae83a" stroke-width="1"/><rect x="73.5" y="67.0" width="2" height="15.0" fill="#3ae83a" stroke="#3ae83a" stroke-width="1"/><path d="M78.5 63.9V84.9" stroke="#3ae83a" stroke-width="1"/><rect x="77.5" y="67.0" width="2" height="15.0" fill="#3ae83a" stroke="#3ae83a" stroke-width="1"/><path d="M82.5 66.5V82.3" stroke="#3ae83a" stroke-width="1"/><rect x="81.5" y="67.0" width="2" height="15.0" fill="#3ae83a" stroke="#3ae83a" stroke-width="1"/><path d="M86.5 66.8V85.9" stroke="#3ae83a" stroke-width="1"/><rect x="85.5" y="67.0" width="2" height="15.0" fill="#000" stroke="#3ae83a" stroke-width="1"/><path d="M90.5 25.6V31.9" stroke="#3ae83a" stroke-width="1"/><rect x="89.5" y="26.8" width="2" height="4.5" fill="#000" stroke="#3ae83a" stroke-width="1"/><path d="M94.5 58.0V75.8" stroke="#3ae83a" stroke-width="1"/><rect x="93.5" y="61.2" width="2" height="13.5" fill="#3ae83a" stroke="#3ae83a" stroke-width="1"/><path d="M98.5 65.7V83.3" stroke="#3ae83a" stroke-width="1"/><rect x="97.5" y="66.6" width="2" height="14.8" fill="#3ae83a" stroke="#3ae83a" stroke-width="1"/><path d="M102.5 63.8V81.8" stroke="#3ae83a" stroke-width="1"/><rect x="101.5" y="66.2" width="2" height="14.6" fill="#000" stroke="#3ae83a" stroke-width="1"/><path d="M106.5 65.3V82.8" stroke="#3ae83a" stroke-width="1"/><rect x="105.5" y="65.8" width="2" height="14.4" fill="#000" stroke="#3ae83a" stroke-width="1"/><path d="M110.5 63.4V81.1" stroke="#3ae83a" stroke-width="1"/><rect x="109.5" y="65.4" width="2" height="14.1" fill="#000" stroke="#3ae83a" stroke-width="1"/><path d="M114.5 64.3V79.0" stroke="#3ae83a" stroke-width="1"/><rect x="113.5" y="64.9" width="2" height="13.9" fill="#000" stroke="#3ae83a" stroke-width="1"/><path d="M118.5 62.7V84.2" stroke="#3ae83a" stroke-width="1"/><rect x="117.5" y="64.5" width="2" height="13.7" fill="#000" stroke="#3ae83a" stroke-width="1"/><path d="M122.5 62.3V78.8" stroke="#3ae83a" stroke-width="1"/><rect x="121.5" y="64.1" width="2" height="13.5" fill="#000" stroke="#3ae83a" stroke-width="1"/><path d="M126.5 62.4V79.2" stroke="#3ae83a" stroke-width="1"/><rect x="125.5" y="63.7" width="2" height="13.2" fill="#000" stroke="#3ae83a" stroke-width="1"/><path d="M130.5 59.5V76.7" stroke="#3ae83a" stroke-width="1"/><rect x="129.5" y="63.3" width="2" height="13.0" fill="#000" stroke="#3ae83a" stroke-width="1"/><path d="M134.5 58.6V76.7" stroke="#3ae83a" stroke-width="1"/><rect x="133.5" y="62.8" width="2" height="12.8" fill="#000" stroke="#3ae83a" stroke-width="1"/><path d="M138.5 62.1V77.6" stroke="#3ae83a" stroke-width="1"/><rect x="137.5" y="62.4" width="2" height="12.6" fill="#000" stroke="#3ae83a" stroke-width="1"/><path d="M142.5 59.2V75.2" stroke="#3ae83a" stroke-width="1"/><rect x="141.5" y="62.0" width="2" height="12.3" fill="#000" stroke="#3ae83a" stroke-width="1"/><path d="M146.5 59.9V74.1" stroke="#3ae83a" stroke-width="1"/><rect x="145.5" y="61.6" width="2" height="12.1" fill="#000" stroke="#3ae83a" stroke-width="1"/><path d="M150.5 55.9V74.7" stroke="#3ae83a" stroke-width="1"/><rect x="149.5" y="61.1" width="2" height="11.9" fill="#000" stroke="#3ae83a" stroke-width="1"/><path d="M154.5 56.9V72.5" stroke="#3ae83a" stroke-width="1"/><rect x="153.5" y="60.7" width="2" height="11.7" fill="#000" stroke="#3ae83a" stroke-width="1"/><path d="M158.5 58.3V75.9" stroke="#3ae83a" stroke-width="1"/><rect x="157.5" y="60.3" width="2" height="11.5" fill="#000" stroke="#3ae83a" stroke-width="1"/><path d="M162.5 59.6V75.1" stroke="#3ae83a" stroke-width="1"/><rect x="161.5" y="59.9" width="2" height="11.2" fill="#000" stroke="#3ae83a" stroke-width="1"/><path d="M166.5 56.6V70.8" stroke="#3ae83a" stroke-width="1"/><rect x="165.5" y="59.5" width="2" height="11.0" fill="#000" stroke="#3ae83a" stroke-width="1"/><path d="M170.5 58.4V70.1" stroke="#3ae83a" stroke-width="1"/><rect x="169.5" y="59.0" width="2" height="10.8" fill="#000" stroke="#3ae83a" stroke-width="1"/><path d="M174.5 56.6V71.2" stroke="#3ae83a" stroke-width="1"/><rect x="173.5" y="58.6" width="2" height="10.6" fill="#000" stroke="#3ae83a" stroke-width="1"/><path d="M178.5 57.4V71.0" stroke="#3ae83a" stroke-width="1"/><rect x="177.5" y="58.2" width="2" height="10.3" fill="#000" stroke="#3ae83a" stroke-width="1"/><path d="M182.5 55.7V68.1" stroke="#3ae83a" stroke-width="1"/><rect x="181.5" y="57.8" width="2" height="10.1" fill="#000" stroke="#3ae83a" stroke-width="1"/><path d="M186.5 55.8V69.5" stroke="#3ae83a" stroke-width="1"/><rect x="185.5" y="57.3" width="2" height="9.9" fill="#000" stroke="#3ae83a" stroke-width="1"/><path d="M190.5 54.8V68.7" stroke="#3ae83a" stroke-width="1"/><rect x="189.5" y="56.9" width="2" height="9.7" fill="#000" stroke="#3ae83a" stroke-width="1"/><path d="M194.5 56.0V66.1" stroke="#3ae83a" stroke-width="1"/><rect x="193.5" y="56.5" width="2" height="9.4" fill="#000" stroke="#3ae83a" stroke-width="1"/><path d="M198.5 55.9V66.6" stroke="#3ae83a" stroke-width="1"/><rect x="197.5" y="56.1" width="2" height="9.2" fill="#000" stroke="#3ae83a" stroke-width="1"/><path d="M202.5 51.9V66.9" stroke="#3ae83a" stroke-width="1"/><rect x="201.5" y="55.6" width="2" height="9.0" fill="#000" stroke="#3ae83a" stroke-width="1"/><path d="M206.5 54.0V67.7" stroke="#3ae83a" stroke-width="1"/><rect x="205.5" y="55.2" width="2" height="8.8" fill="#000" stroke="#3ae83a" stroke-width="1"/><path d="M210.5 54.1V64.9" stroke="#3ae83a" stroke-width="1"/><rect x="209.5" y="54.8" width="2" height="8.5" fill="#000" stroke="#3ae83a" stroke-width="1"/><path d="M214.5 52.6V65.5" stroke="#3ae83a" stroke-width="1"/><rect x="213.5" y="54.4" width="2" height="8.3" fill="#000" stroke="#3ae83a" stroke-width="1"/><path d="M218.5 53.6V62.3" stroke="#3ae83a" stroke-width="1"/><rect x="217.5" y="54.0" width="2" height="8.1" fill="#000" stroke="#3ae83a" stroke-width="1"/><path d="M222.5 49.9V61.7" stroke="#3ae83a" stroke-width="1"/><rect x="221.5" y="53.5" width="2" height="7.9" fill="#000" stroke="#3ae83a" stroke-width="1"/><path d="M226.5 53.1V61.8" stroke="#3ae83a" stroke-width="1"/><rect x="225.5" y="53.1" width="2" height="7.6" fill="#000" stroke="#3ae83a" stroke-width="1"/><path d="M230.5 51.3V61.5" stroke="#3ae83a" stroke-width="1"/><rect x="229.5" y="52.7" width="2" height="7.4" fill="#000" stroke="#3ae83a" stroke-width="1"/><path d="M234.5 51.1V60.0" stroke="#3ae83a" stroke-width="1"/><rect x="233.5" y="52.3" width="2" height="7.2" fill="#000" stroke="#3ae83a" stroke-width="1"/><path d="M238.5 50.5V59.1" stroke="#3ae83a" stroke-width="1"/><rect x="237.5" y="51.8" width="2" height="7.0" fill="#000" stroke="#3ae83a" stroke-width="1"/><path d="M242.5 50.9V61.6" stroke="#3ae83a" stroke-width="1"/><rect x="241.5" y="51.4" width="2" height="6.8" fill="#000" stroke="#3ae83a" stroke-width="1"/><path d="M246.5 49.1V58.1" stroke="#3ae83a" stroke-width="1"/><rect x="245.5" y="51.0" width="2" height="6.5" fill="#000" stroke="#3ae83a" stroke-width="1"/><path d="M250.5 50.1V57.0" stroke="#3ae83a" stroke-width="1"/><rect x="249.5" y="50.6" width="2" height="6.3" fill="#000" stroke="#3ae83a" stroke-width="1"/><path d="M254.5 48.4V57.7" stroke="#3ae83a" stroke-width="1"/><rect x="253.5" y="50.2" width="2" height="6.1" fill="#000" stroke="#3ae83a" stroke-width="1"/><path d="M258.5 49.6V57.0" stroke="#3ae83a" stroke-width="1"/><rect x="257.5" y="50.0" width="2" height="6.0" fill="#000" stroke="#3ae83a" stroke-width="1"/><path d="M262.5 43.7V58.4" stroke="#3ae83a" stroke-width="1"/><rect x="261.5" y="45.8" width="2" height="11.0" fill="#000" stroke="#3ae83a" stroke-width="1"/><path d="M266.5 44.2V60.8" stroke="#3ae83a" stroke-width="1"/><rect x="265.5" y="45.0" width="2" height="12.9" fill="#3ae83a" stroke="#3ae83a" stroke-width="1"/><path d="M270.5 54.4V60.0" stroke="#3ae83a" stroke-width="1"/><rect x="269.5" y="54.6" width="2" height="3.4" fill="#3ae83a" stroke="#3ae83a" stroke-width="1"/><path d="M274.5 46.9V57.3" stroke="#3ae83a" stroke-width="1"/><rect x="273.5" y="48.1" width="2" height="9.0" fill="#000" stroke="#3ae83a" stroke-width="1"/><path d="M278.5 44.1V48.7" stroke="#3ae83a" stroke-width="1"/><rect x="277.5" y="44.4" width="2" height="3.0" fill="#000" stroke="#3ae83a" stroke-width="1"/><path d="M282.5 43.1V62.0" stroke="#3ae83a" stroke-width="1"/><rect x="281.5" y="44.0" width="2" height="10.8" fill="#3ae83a" stroke="#3ae83a" stroke-width="1"/><path d="M286.5 53.0V70.4" stroke="#3ae83a" stroke-width="1"/><rect x="285.5" y="54.5" width="2" height="15.5" fill="#3ae83a" stroke="#3ae83a" stroke-width="1"/><path d="M290.5 66.1V88.4" stroke="#3ae83a" stroke-width="1"/><rect x="289.5" y="70.0" width="2" height="17.8" fill="#3ae83a" stroke="#3ae83a" stroke-width="1"/><path d="M294.5 86.2V92.8" stroke="#3ae83a" stroke-width="1"/><rect x="293.5" y="87.8" width="2" height="4.9" fill="#3ae83a" stroke="#3ae83a" stroke-width="1"/><path d="M298.5 90.4V96.5" stroke="#3ae83a" stroke-width="1"/><rect x="297.5" y="91.8" width="2" height="3.0" fill="#3ae83a" stroke="#3ae83a" stroke-width="1"/><path d="M302.5 92.9V101.1" stroke="#3ae83a" stroke-width="1"/><rect x="301.5" y="94.6" width="2" height="5.6" fill="#3ae83a" stroke="#3ae83a" stroke-width="1"/><path d="M306.5 96.2V101.6" stroke="#3ae83a" stroke-width="1"/><rect x="305.5" y="96.8" width="2" height="4.2" fill="#3ae83a" stroke="#3ae83a" stroke-width="1"/><path d="M310.5 93.5V103.0" stroke="#3ae83a" stroke-width="1"/><rect x="309.5" y="95.2" width="2" height="2.2" fill="#000" stroke="#3ae83a" stroke-width="1"/><path d="M314.5 93.7V98.3" stroke="#3ae83a" stroke-width="1"/><rect x="313.5" y="95.0" width="2" height="2.0" fill="#000" stroke="#3ae83a" stroke-width="1"/><path d="M318.5 92.1V97.6" stroke="#3ae83a" stroke-width="1"/><rect x="317.5" y="93.2" width="2" height="2.9" fill="#000" stroke="#3ae83a" stroke-width="1"/><path d="M322.5 89.6V96.5" stroke="#3ae83a" stroke-width="1"/><rect x="321.5" y="93.0" width="2" height="2.1" fill="#000" stroke="#3ae83a" stroke-width="1"/><path d="M326.5 90.7V95.8" stroke="#3ae83a" stroke-width="1"/><rect x="325.5" y="92.1" width="2" height="2.9" fill="#000" stroke="#3ae83a" stroke-width="1"/><path d="M330.5 85.7V93.5" stroke="#3ae83a" stroke-width="1"/><rect x="329.5" y="90.2" width="2" height="3.0" fill="#000" stroke="#3ae83a" stroke-width="1"/><path d="M334.5 85.2V93.1" stroke="#3ae83a" stroke-width="1"/><rect x="333.5" y="89.1" width="2" height="3.0" fill="#000" stroke="#3ae83a" stroke-width="1"/><path d="M338.5 81.8V90.9" stroke="#3ae83a" stroke-width="1"/><rect x="337.5" y="84.6" width="2" height="5.6" fill="#000" stroke="#3ae83a" stroke-width="1"/><path d="M342.5 79.3V93.0" stroke="#3ae83a" stroke-width="1"/><rect x="341.5" y="81.4" width="2" height="7.8" fill="#000" stroke="#3ae83a" stroke-width="1"/><path d="M346.5 67.0V83.4" stroke="#3ae83a" stroke-width="1"/><rect x="345.5" y="70.5" width="2" height="12.4" fill="#000" stroke="#3ae83a" stroke-width="1"/><path d="M350.5 67.7V83.0" stroke="#3ae83a" stroke-width="1"/><rect x="349.5" y="69.9" width="2" height="13.0" fill="#3ae83a" stroke="#3ae83a" stroke-width="1"/><path d="M354.5 78.8V94.7" stroke="#3ae83a" stroke-width="1"/><rect x="353.5" y="79.6" width="2" height="13.9" fill="#3ae83a" stroke="#3ae83a" stroke-width="1"/><path d="M358.5 79.1V102.0" stroke="#3ae83a" stroke-width="1"/><rect x="357.5" y="80.1" width="2" height="16.6" fill="#3ae83a" stroke="#3ae83a" stroke-width="1"/><path d="M362.5 79.6V96.2" stroke="#3ae83a" stroke-width="1"/><rect x="361.5" y="80.0" width="2" height="15.2" fill="#000" stroke="#3ae83a" stroke-width="1"/><path d="M366.5 78.3V97.4" stroke="#3ae83a" stroke-width="1"/><rect x="365.5" y="79.2" width="2" height="16.5" fill="#000" stroke="#3ae83a" stroke-width="1"/><path d="M370.5 77.0V94.6" stroke="#3ae83a" stroke-width="1"/><rect x="369.5" y="79.0" width="2" height="15.6" fill="#3ae83a" stroke="#3ae83a" stroke-width="1"/><path d="M374.5 86.1V102.6" stroke="#3ae83a" stroke-width="1"/><rect x="373.5" y="89.3" width="2" height="9.8" fill="#3ae83a" stroke="#3ae83a" stroke-width="1"/><path d="M378.5 92.0V113.5" stroke="#3ae83a" stroke-width="1"/><rect x="377.5" y="98.8" width="2" height="6.1" fill="#3ae83a" stroke="#3ae83a" stroke-width="1"/><path d="M382.5 98.0V113.5" stroke="#3ae83a" stroke-width="1"/><rect x="381.5" y="102.4" width="2" height="2.9" fill="#3ae83a" stroke="#3ae83a" stroke-width="1"/><path d="M386.5 102.6V110.4" stroke="#3ae83a" stroke-width="1"/><rect x="385.5" y="103.0" width="2" height="5.4" fill="#3ae83a" stroke="#3ae83a" stroke-width="1"/><path d="M390.5 104.0V113.1" stroke="#3ae83a" stroke-width="1"/><rect x="389.5" y="104.8" width="2" height="5.1" fill="#3ae83a" stroke="#3ae83a" stroke-width="1"/><path d="M394.5 101.9V116.1" stroke="#3ae83a" stroke-width="1"/><rect x="393.5" y="104.6" width="2" height="7.2" fill="#3ae83a" stroke="#3ae83a" stroke-width="1"/><path d="M398.5 106.2V118.1" stroke="#3ae83a" stroke-width="1"/><rect x="397.5" y="108.8" width="2" height="5.6" fill="#3ae83a" stroke="#3ae83a" stroke-width="1"/><path d="M402.5 112.8V122.6" stroke="#3ae83a" stroke-width="1"/><rect x="401.5" y="113.8" width="2" height="6.5" fill="#3ae83a" stroke="#3ae83a" stroke-width="1"/><path d="M406.5 114.1V124.0" stroke="#3ae83a" stroke-width="1"/><rect x="405.5" y="115.7" width="2" height="6.3" fill="#3ae83a" stroke="#3ae83a" stroke-width="1"/><path d="M410.5 115.9V119.5" stroke="#3ae83a" stroke-width="1"/><rect x="409.5" y="116.0" width="2" height="2.6" fill="#000" stroke="#3ae83a" stroke-width="1"/><path d="M414.5 112.8V121.4" stroke="#3ae83a" stroke-width="1"/><rect x="413.5" y="115.1" width="2" height="2.0" fill="#000" stroke="#3ae83a" stroke-width="1"/><path d="M418.5 115.9V122.4" stroke="#3ae83a" stroke-width="1"/><rect x="417.5" y="116.8" width="2" height="2.0" fill="#3ae83a" stroke="#3ae83a" stroke-width="1"/><path d="M422.5 115.3V123.2" stroke="#3ae83a" stroke-width="1"/><rect x="421.5" y="118.8" width="2" height="2.0" fill="#3ae83a" stroke="#3ae83a" stroke-width="1"/><path d="M426.5 118.5V123.4" stroke="#3ae83a" stroke-width="1"/><rect x="425.5" y="119.9" width="2" height="2.0" fill="#000" stroke="#3ae83a" stroke-width="1"/><path d="M430.5 109.2V125.4" stroke="#3ae83a" stroke-width="1"/><rect x="429.5" y="110.4" width="2" height="10.8" fill="#000" stroke="#3ae83a" stroke-width="1"/><path d="M434.5 104.7V117.8" stroke="#3ae83a" stroke-width="1"/><rect x="433.5" y="109.0" width="2" height="5.4" fill="#000" stroke="#3ae83a" stroke-width="1"/><path d="M438.5 110.5V113.9" stroke="#3ae83a" stroke-width="1"/><rect x="437.5" y="111.4" width="2" height="1.7" fill="#000" stroke="#3ae83a" stroke-width="1"/><path d="M442.5 107.0V112.6" stroke="#3ae83a" stroke-width="1"/><rect x="441.5" y="107.5" width="2" height="4.8" fill="#3ae83a" stroke="#3ae83a" stroke-width="1"/><path d="M446.5 102.0V124.2" stroke="#3ae83a" stroke-width="1"/><rect x="445.5" y="106.0" width="2" height="16.3" fill="#3ae83a" stroke="#3ae83a" stroke-width="1"/><path d="M450.5 120.8V142.0" stroke="#3ae83a" stroke-width="1"/><rect x="449.5" y="121.8" width="2" height="13.6" fill="#3ae83a" stroke="#3ae83a" stroke-width="1"/><path d="M454.5 122.0V141.3" stroke="#3ae83a" stroke-width="1"/><rect x="453.5" y="128.4" width="2" height="10.4" fill="#3ae83a" stroke="#3ae83a" stroke-width="1"/><path d="M458.5 128.6V138.5" stroke="#3ae83a" stroke-width="1"/><rect x="457.5" y="129.0" width="2" height="7.4" fill="#3ae83a" stroke="#3ae83a" stroke-width="1"/><path d="M462.5 133.2V141.4" stroke="#3ae83a" stroke-width="1"/><rect x="461.5" y="134.6" width="2" height="6.2" fill="#3ae83a" stroke="#3ae83a" stroke-width="1"/><path d="M466.5 139.0V157.2" stroke="#3ae83a" stroke-width="1"/><rect x="465.5" y="140.5" width="2" height="15.8" fill="#3ae83a" stroke="#3ae83a" stroke-width="1"/><path d="M470.5 142.0V162.8" stroke="#3ae83a" stroke-width="1"/><rect x="469.5" y="144.2" width="2" height="16.8" fill="#3ae83a" stroke="#3ae83a" stroke-width="1"/><path d="M474.5 135.0V152.0" stroke="#3ae83a" stroke-width="1"/><rect x="473.5" y="145.0" width="2" height="4.1" fill="#000" stroke="#3ae83a" stroke-width="1"/><path d="M478.5 144.3V150.0" stroke="#3ae83a" stroke-width="1"/><rect x="477.5" y="145.0" width="2" height="1.2" fill="#000" stroke="#3ae83a" stroke-width="1"/><path d="M482.5 129.0V147.1" stroke="#3ae83a" stroke-width="1"/><rect x="481.5" y="141.2" width="2" height="5.5" fill="#000" stroke="#3ae83a" stroke-width="1"/><path d="M486.5 139.5V147.8" stroke="#3ae83a" stroke-width="1"/><rect x="485.5" y="140.0" width="2" height="7.0" fill="#3ae83a" stroke="#3ae83a" stroke-width="1"/><path d="M490.5 142.8V155.1" stroke="#3ae83a" stroke-width="1"/><rect x="489.5" y="146.3" width="2" height="5.8" fill="#3ae83a" stroke="#3ae83a" stroke-width="1"/><path d="M494.5 139.4V153.9" stroke="#3ae83a" stroke-width="1"/><rect x="493.5" y="141.0" width="2" height="12.5" fill="#000" stroke="#3ae83a" stroke-width="1"/><path d="M498.5 131.4V142.7" stroke="#3ae83a" stroke-width="1"/><rect x="497.5" y="133.7" width="2" height="8.8" fill="#000" stroke="#3ae83a" stroke-width="1"/><path d="M502.5 131.0V138.3" stroke="#3ae83a" stroke-width="1"/><rect x="501.5" y="132.0" width="2" height="5.5" fill="#000" stroke="#3ae83a" stroke-width="1"/><path d="M506.5 134.8V142.1" stroke="#3ae83a" stroke-width="1"/><rect x="505.5" y="135.0" width="2" height="3.5" fill="#3ae83a" stroke="#3ae83a" stroke-width="1"/><path d="M510.5 132.9V141.2" stroke="#3ae83a" stroke-width="1"/><rect x="509.5" y="136.7" width="2" height="1.6" fill="#3ae83a" stroke="#3ae83a" stroke-width="1"/><path d="M514.5 132.1V142.8" stroke="#3ae83a" stroke-width="1"/><rect x="513.5" y="136.3" width="2" height="2.5" fill="#000" stroke="#3ae83a" stroke-width="1"/><path d="M518.5 122.0V140.0" stroke="#3ae83a" stroke-width="1"/><rect x="517.5" y="129.8" width="2" height="9.2" fill="#000" stroke="#3ae83a" stroke-width="1"/><path d="M522.5 128.5V139.2" stroke="#3ae83a" stroke-width="1"/><rect x="521.5" y="128.5" width="2" height="8.2" fill="#000" stroke="#3ae83a" stroke-width="1"/><path d="M526.5 127.2V137.9" stroke="#3ae83a" stroke-width="1"/><rect x="525.5" y="129.8" width="2" height="6.2" fill="#000" stroke="#3ae83a" stroke-width="1"/><path d="M530.5 129.7V132.1" stroke="#3ae83a" stroke-width="1"/><rect x="529.5" y="130.0" width="2" height="2.1" fill="#000" stroke="#3ae83a" stroke-width="1"/><path d="M534.5 122.6V131.7" stroke="#3ae83a" stroke-width="1"/><rect x="533.5" y="124.4" width="2" height="7.1" fill="#000" stroke="#3ae83a" stroke-width="1"/><path d="M538.5 121.0V131.0" stroke="#3ae83a" stroke-width="1"/><rect x="537.5" y="123.0" width="2" height="6.6" fill="#000" stroke="#3ae83a" stroke-width="1"/><path d="M542.5 125.7V135.0" stroke="#3ae83a" stroke-width="1"/><rect x="541.5" y="126.0" width="2" height="8.2" fill="#3ae83a" stroke="#3ae83a" stroke-width="1"/><path d="M546.5 116.9V152.0" stroke="#3ae83a" stroke-width="1"/><rect x="545.5" y="121.9" width="2" height="13.8" fill="#000" stroke="#3ae83a" stroke-width="1"/><path d="M550.5 111.3V123.9" stroke="#3ae83a" stroke-width="1"/><rect x="549.5" y="112.4" width="2" height="11.3" fill="#000" stroke="#3ae83a" stroke-width="1"/><path d="M554.5 110.1V121.4" stroke="#3ae83a" stroke-width="1"/><rect x="553.5" y="110.8" width="2" height="7.6" fill="#000" stroke="#3ae83a" stroke-width="1"/><path d="M558.5 111.4V119.1" stroke="#3ae83a" stroke-width="1"/><rect x="557.5" y="114.1" width="2" height="4.7" fill="#3ae83a" stroke="#3ae83a" stroke-width="1"/><path d="M562.5 114.5V123.5" stroke="#3ae83a" stroke-width="1"/><rect x="561.5" y="115.8" width="2" height="4.8" fill="#3ae83a" stroke="#3ae83a" stroke-width="1"/><path d="M566.5 108.6V130.0" stroke="#3ae83a" stroke-width="1"/><rect x="565.5" y="118.4" width="2" height="1.8" fill="#3ae83a" stroke="#3ae83a" stroke-width="1"/><path d="M570.5 101.0V121.5" stroke="#3ae83a" stroke-width="1"/><rect x="569.5" y="115.8" width="2" height="4.2" fill="#000" stroke="#3ae83a" stroke-width="1"/><path d="M574.5 112.7V119.3" stroke="#3ae83a" stroke-width="1"/><rect x="573.5" y="114.2" width="2" height="4.2" fill="#000" stroke="#3ae83a" stroke-width="1"/><path d="M578.5 103.0V118.3" stroke="#3ae83a" stroke-width="1"/><rect x="577.5" y="109.3" width="2" height="8.7" fill="#000" stroke="#3ae83a" stroke-width="1"/><path d="M582.5 97.0V113.5" stroke="#3ae83a" stroke-width="1"/><rect x="581.5" y="102.7" width="2" height="8.2" fill="#000" stroke="#3ae83a" stroke-width="1"/><path d="M586.5 90.2V103.8" stroke="#3ae83a" stroke-width="1"/><rect x="585.5" y="92.2" width="2" height="10.8" fill="#000" stroke="#3ae83a" stroke-width="1"/><path d="M590.5 85.9V93.2" stroke="#3ae83a" stroke-width="1"/><rect x="589.5" y="86.6" width="2" height="4.8" fill="#000" stroke="#3ae83a" stroke-width="1"/><path d="M594.5 78.6V90.5" stroke="#3ae83a" stroke-width="1"/><rect x="593.5" y="80.4" width="2" height="6.2" fill="#000" stroke="#3ae83a" stroke-width="1"/><path d="M598.5 77.5V82.5" stroke="#3ae83a" stroke-width="1"/><rect x="597.5" y="79.0" width="2" height="2.3" fill="#000" stroke="#3ae83a" stroke-width="1"/><path d="M602.5 79.2V84.7" stroke="#3ae83a" stroke-width="1"/><rect x="601.5" y="80.5" width="2" height="1.8" fill="#3ae83a" stroke="#3ae83a" stroke-width="1"/><path d="M606.5 77.6V85.9" stroke="#3ae83a" stroke-width="1"/><rect x="605.5" y="80.2" width="2" height="4.3" fill="#3ae83a" stroke="#3ae83a" stroke-width="1"/><path d="M610.5 82.2V86.2" stroke="#3ae83a" stroke-width="1"/><rect x="609.5" y="82.2" width="2" height="3.5" fill="#3ae83a" stroke="#3ae83a" stroke-width="1"/><path d="M614.5 84.5V89.1" stroke="#3ae83a" stroke-width="1"/><rect x="613.5" y="84.5" width="2" height="3.8" fill="#3ae83a" stroke="#3ae83a" stroke-width="1"/><path d="M618.5 85.0V89.3" stroke="#3ae83a" stroke-width="1"/><rect x="617.5" y="85.8" width="2" height="3.2" fill="#3ae83a" stroke="#3ae83a" stroke-width="1"/><path d="M622.5 80.6V88.2" stroke="#3ae83a" stroke-width="1"/><rect x="621.5" y="83.4" width="2" height="3.4" fill="#000" stroke="#3ae83a" stroke-width="1"/><path d="M626.5 82.2V90.7" stroke="#3ae83a" stroke-width="1"/><rect x="625.5" y="82.9" width="2" height="5.3" fill="#000" stroke="#3ae83a" stroke-width="1"/><path d="M630.5 85.3V89.2" stroke="#3ae83a" stroke-width="1"/><rect x="629.5" y="86.1" width="2" height="2.1" fill="#3ae83a" stroke="#3ae83a" stroke-width="1"/><path d="M634.5 83.1V88.0" stroke="#3ae83a" stroke-width="1"/><rect x="633.5" y="87.0" width="2" height="1.0" fill="#3ae83a" stroke="#3ae83a" stroke-width="1"/><path d="M638.5 83.0V96.6" stroke="#3ae83a" stroke-width="1"/><rect x="637.5" y="87.8" width="2" height="6.3" fill="#3ae83a" stroke="#3ae83a" stroke-width="1"/><path d="M642.5 83.2V101.0" stroke="#3ae83a" stroke-width="1"/><rect x="641.5" y="84.9" width="2" height="10.7" fill="#000" stroke="#3ae83a" stroke-width="1"/><path d="M646.5 78.1V89.8" stroke="#3ae83a" stroke-width="1"/><rect x="645.5" y="82.1" width="2" height="7.3" fill="#000" stroke="#3ae83a" stroke-width="1"/><path d="M650.5 81.5V88.3" stroke="#3ae83a" stroke-width="1"/><rect x="649.5" y="81.9" width="2" height="5.4" fill="#000" stroke="#3ae83a" stroke-width="1"/><path d="M4 85.5H654" stroke="#a0a0a0" stroke-width="1"/><rect x="3.5" y="3.5" width="651" height="166.0" fill="none" stroke="#fff" stroke-width="1"/><path d="M654 9.5H660" stroke="#fff" stroke-width="1"/><path d="M654 41.5H660" stroke="#fff" stroke-width="1"/><path d="M654 73.5H660" stroke="#fff" stroke-width="1"/><rect x="657" y="78.5" width="37" height="13.5" fill="#98a4b2"/><path d="M654 85.5H660" stroke="#fff" stroke-width="1"/><path d="M654 105.5H660" stroke="#fff" stroke-width="1"/><path d="M654 137.5H660" stroke="#fff" stroke-width="1"/><path d="M3.5 169V173 M131.5 169V173 M259.5 169V173 M387.5 169V173 M515.5 169V173 M643.5 169V173" stroke="#fff" stroke-width="1"/></svg>
<div class="t" style="left:1104.5px;top:86.00px;font-size:13px;line-height:13px;color:#fff;font-weight:normal;">1.0885</div>
<div class="t" style="left:1104.5px;top:118.00px;font-size:13px;line-height:13px;color:#fff;font-weight:normal;">1.0859</div>
<div class="t" style="left:1104.5px;top:150.00px;font-size:13px;line-height:13px;color:#fff;font-weight:normal;">1.0833</div>
<div class="t" style="left:1104.5px;top:162.00px;font-size:13px;line-height:13px;color:#0c0c18;font-weight:normal;">1.0823</div>
<div class="t" style="left:1104.5px;top:182.00px;font-size:13px;line-height:13px;color:#fff;font-weight:normal;">1.0807</div>
<div class="t" style="left:1104.5px;top:214.00px;font-size:13px;line-height:13px;color:#fff;font-weight:normal;">1.0781</div>
<div class="t" style="left:447px;top:256.50px;font-size:13px;line-height:13px;color:#fff;font-weight:normal;">16 Oct 2024</div>
<div class="t" style="left:575px;top:256.50px;font-size:13px;line-height:13px;color:#fff;font-weight:normal;">18 Oct 02:00</div>
<div class="t" style="left:703px;top:256.50px;font-size:13px;line-height:13px;color:#fff;font-weight:normal;">21 Oct 10:00</div>
<div class="t" style="left:831px;top:256.50px;font-size:13px;line-height:13px;color:#fff;font-weight:normal;">22 Oct 18:00</div>
<div class="t" style="left:959px;top:256.50px;font-size:13px;line-height:13px;color:#fff;font-weight:normal;">24 Oct 02:00</div>
<div class="t" style="left:1087px;top:256.50px;font-size:13px;line-height:13px;color:#fff;font-weight:normal;">25 Oct 10:00</div>
<div class="r" style="left:453px;top:92px;width:18px;height:14px;background:transparent"></div>
<svg class="r" style="left:452px;top:92px;" width="21" height="15" viewBox="0 0 21 15"><rect x="1.5" y="1.5" width="8.5" height="11.5" fill="#f4a898"/><rect x="10" y="1.5" width="9" height="11.5" fill="#acd4f8"/><rect x="1.5" y="1.5" width="17.5" height="11.5" fill="none" stroke="#fff" stroke-width="1"/><path d="M3.5 4.5H8.5M3.5 7.5H8.5M3.5 10.5H8.5" stroke="#d84838" stroke-width="1.2"/><path d="M11.5 4.5H17M11.5 7.5H17M11.5 10.5H17" stroke="#2a70b8" stroke-width="1.2"/></svg>
<svg class="r" style="left:479px;top:91px;" width="22" height="17" viewBox="0 0 22 17"><path d="M2 3H8V7.5H10V15H2Z" fill="#f4b4a4"/><path d="M13.5 3H20V15H11.5V9H13.5Z" fill="#a8d0f8"/><rect x="8.5" y="1.5" width="6" height="3" rx="1.5" fill="#d8d8d8"/></svg>
<div class="t" style="left:507px;top:94.00px;font-size:13px;line-height:13px;color:#fff;font-weight:normal;transform:scaleX(0.92);transform-origin:0 0;">EURUSD, H1:&nbsp; Euro vs US Dollar</div>
<div class="r" style="left:451px;top:113px;width:59px;height:27px;background:linear-gradient(180deg,#f65050,#dc2828)"></div>
<div class="r" style="left:643px;top:113px;width:59px;height:27px;background:linear-gradient(180deg,#f65050,#dc2828)"></div>
<div class="r" style="left:455px;top:139px;width:52px;height:1px;background:#ff8c8c"></div>
<div class="r" style="left:646px;top:139px;width:52px;height:1px;background:#ff8c8c"></div>
<div class="t" style="left:465px;top:118.80px;font-size:15px;line-height:15px;color:#ffe0e0;font-weight:normal;transform:scaleX(0.84);transform-origin:0 0;">SELL</div>
<div class="t" style="left:658px;top:118.80px;font-size:15px;line-height:15px;color:#ffe0e0;font-weight:normal;transform:scaleX(0.93);transform-origin:0 0;">BUY</div>
<div class="r" style="left:510px;top:113px;width:133px;height:26px;background:#000"></div>
<div class="r" style="left:513px;top:113.5px;width:24px;height:24px;background:linear-gradient(180deg,#f4f4f4,#dadada)"></div>
<div class="r" style="left:537px;top:113.5px;width:78px;height:24px;background:#fff"></div>
<div class="r" style="left:616px;top:113.5px;width:24px;height:24px;background:linear-gradient(180deg,#f4f4f4,#dadada)"></div>
<svg class="r" style="left:520px;top:123px;" width="10" height="6" viewBox="0 0 10 6"><path d="M0 0H10L5 5Z" fill="#000"/></svg>
<svg class="r" style="left:623px;top:122px;" width="10" height="6" viewBox="0 0 10 6"><path d="M0 5H10L5 0Z" fill="#000"/></svg>
<div class="t" style="right:530px;top:119.15px;font-size:14px;line-height:14px;color:#000;font-weight:normal;">0.01</div>
<div class="r" style="left:451px;top:140px;width:125px;height:46px;background:linear-gradient(180deg,#f24848 0%,#d82020 45%,#c01010 100%)"></div>
<div class="r" style="left:578px;top:140px;width:124px;height:46px;background:linear-gradient(180deg,#f24848 0%,#d82020 45%,#c01010 100%)"></div>
<div class="t" style="left:472px;top:163.80px;font-size:15px;line-height:15px;color:#fff;font-weight:bold;">1.08</div>
<div class="t" style="left:505px;top:145.18px;font-size:37px;line-height:37px;color:#fff;font-weight:normal;">23</div>
<div class="t" style="left:549px;top:148.65px;font-size:14px;line-height:14px;color:#fff;font-weight:bold;">5</div>
<div class="t" style="left:597px;top:163.80px;font-size:15px;line-height:15px;color:#fff;font-weight:bold;">1.08</div>
<div class="t" style="left:633px;top:145.18px;font-size:37px;line-height:37px;color:#fff;font-weight:normal;">25</div>
<div class="t" style="left:676px;top:148.65px;font-size:14px;line-height:14px;color:#fff;font-weight:bold;">0</div>
<div class="r" style="left:437px;top:284px;width:701px;height:36px;background:#deeefa"></div>
<div class="r" style="left:437px;top:283px;width:701px;height:2px;background:#545a5e"></div>
<div class="r" style="left:444px;top:319px;width:694px;height:1px;background:#80868a"></div>
<div class="r" style="left:437px;top:320px;width:7px;height:193px;background:#deeefa"></div>
<svg class="r" style="left:448px;top:291px;" width="20" height="20" viewBox="0 0 20 20"><path d="M5 2 V16 M13.5 1 V18" stroke="#2ab83a" stroke-width="1.3"/><rect x="3" y="5.5" width="4.5" height="7" fill="#d8f4d8" stroke="#2ab83a" stroke-width="1.4"/><rect x="11" y="4.5" width="5" height="9" fill="#d8f4d8" stroke="#2ab83a" stroke-width="1.4"/></svg>
<div class="t" style="left:472px;top:293.80px;font-size:15px;line-height:15px;color:#1a1a2a;font-weight:normal;transform:scaleX(0.915);transform-origin:0 0;">USDCHF,H1</div>
<svg class="r" style="left:1055px;top:303px;" width="14" height="6" viewBox="0 0 14 6"><path d="M2 4.5 H13" stroke="#000" stroke-width="2"/></svg>
<svg class="r" style="left:1097px;top:296px;" width="15" height="14" viewBox="0 0 15 14"><rect x="2.5" y="2" width="10.5" height="10" fill="none" stroke="#000" stroke-width="2"/></svg>
<div class="r" style="left:437px;top:513px;width:701px;height:7px;background:#deeefa"></div>
<svg class="r" style="left:444px;top:320px;" width="694" height="193" viewBox="0 0 694 193"><rect x="0" y="0" width="694" height="193" fill="#000"/><path d="M35.5 4V169" stroke="#a8a8a8" stroke-width="1" stroke-dasharray="4 2"/><path d="M67.5 4V169" stroke="#a8a8a8" stroke-width="1" stroke-dasharray="4 2"/><path d="M99.5 4V169" stroke="#a8a8a8" stroke-width="1" stroke-dasharray="4 2"/><path d="M131.5 4V169" stroke="#a8a8a8" stroke-width="1" stroke-dasharray="4 2"/><path d="M163.5 4V169" stroke="#a8a8a8" stroke-width="1" stroke-dasharray="4 2"/><path d="M195.5 4V169" stroke="#a8a8a8" stroke-width="1" stroke-dasharray="4 2"/><path d="M227.5 4V169" stroke="#a8a8a8" stroke-width="1" stroke-dasharray="4 2"/><path d="M259.5 4V169" stroke="#a8a8a8" stroke-width="1" stroke-dasharray="4 2"/><path d="M291.5 4V169" stroke="#a8a8a8" stroke-width="1" stroke-dasharray="4 2"/><path d="M323.5 4V169" stroke="#a8a8a8" stroke-width="1" stroke-dasharray="4 2"/><path d="M355.5 4V169" stroke="#a8a8a8" stroke-width="1" stroke-dasharray="4 2"/><path d="M387.5 4V169" stroke="#a8a8a8" stroke-width="1" stroke-dasharray="4 2"/><path d="M419.5 4V169" stroke="#a8a8a8" stroke-width="1" stroke-dasharray="4 2"/><path d="M451.5 4V169" stroke="#a8a8a8" stroke-width="1" stroke-dasharray="4 2"/><path d="M483.5 4V169" stroke="#a8a8a8" stroke-width="1" stroke-dasharray="4 2"/><path d="M515.5 4V169" stroke="#a8a8a8" stroke-width="1" stroke-dasharray="4 2"/><path d="M547.5 4V169" stroke="#a8a8a8" stroke-width="1" stroke-dasharray="4 2"/><path d="M579.5 4V169" stroke="#a8a8a8" stroke-width="1" stroke-dasharray="4 2"/><path d="M611.5 4V169" stroke="#a8a8a8" stroke-width="1" stroke-dasharray="4 2"/><path d="M643.5 4V169" stroke="#a8a8a8" stroke-width="1" stroke-dasharray="4 2"/><path d="M4 7.5H654" stroke="#a8a8a8" stroke-width="1" stroke-dasharray="4 2"/><path d="M4 39.5H654" stroke="#a8a8a8" stroke-width="1" stroke-dasharray="4 2"/><path d="M4 104.5H654" stroke="#a8a8a8" stroke-width="1" stroke-dasharray="4 2"/><path d="M4 137.5H654" stroke="#a8a8a8" stroke-width="1" stroke-dasharray="4 2"/><path d="M6.5 106.4V129.6M4.5 107.7H6.5M6.5 108.3H8.5" stroke="#3cc83c" stroke-width="1"/><path d="M10.5 106.0V121.6M8.5 116.5H10.5M10.5 110.8H12.5" stroke="#3cc83c" stroke-width="1"/><path d="M14.5 105.3V126.4M12.5 117.6H14.5M14.5 108.7H16.5" stroke="#3cc83c" stroke-width="1"/><path d="M18.5 104.8V114.4M16.5 111.8H18.5M18.5 114.4H20.5" stroke="#3cc83c" stroke-width="1"/><path d="M22.5 97.6V108.8M20.5 102.6H22.5M22.5 100.6H24.5" stroke="#3cc83c" stroke-width="1"/><path d="M26.5 100.6V142.5M24.5 120.1H26.5M26.5 113.9H28.5" stroke="#3cc83c" stroke-width="1"/><path d="M30.5 104.4V122.2M28.5 113.7H30.5M30.5 114.4H32.5" stroke="#3cc83c" stroke-width="1"/><path d="M34.5 104.2V109.4M32.5 105.9H34.5M34.5 104.9H36.5" stroke="#3cc83c" stroke-width="1"/><path d="M38.5 83.2V101.0M36.5 95.2H38.5M38.5 86.4H40.5" stroke="#3cc83c" stroke-width="1"/><path d="M42.5 81.2V98.9M40.5 94.2H42.5M42.5 97.2H44.5" stroke="#3cc83c" stroke-width="1"/><path d="M46.5 80.8V98.9M44.5 87.2H46.5M46.5 98.5H48.5" stroke="#3cc83c" stroke-width="1"/><path d="M50.5 81.4V97.0M48.5 93.1H50.5M50.5 92.5H52.5" stroke="#3cc83c" stroke-width="1"/><path d="M54.5 79.9V98.1M52.5 88.8H54.5M54.5 96.7H56.5" stroke="#3cc83c" stroke-width="1"/><path d="M58.5 80.0V99.0M56.5 86.7H58.5M58.5 96.8H60.5" stroke="#3cc83c" stroke-width="1"/><path d="M62.5 81.2V97.9M60.5 90.7H62.5M62.5 96.6H64.5" stroke="#3cc83c" stroke-width="1"/><path d="M66.5 80.7V98.0M64.5 84.5H66.5M66.5 86.3H68.5" stroke="#3cc83c" stroke-width="1"/><path d="M70.5 98.1V103.1M68.5 102.7H70.5M70.5 99.4H72.5" stroke="#3cc83c" stroke-width="1"/><path d="M74.5 104.7V111.4M72.5 111.1H74.5M74.5 109.5H76.5" stroke="#3cc83c" stroke-width="1"/><path d="M78.5 104.9V123.6M76.5 117.0H78.5M78.5 115.9H80.5" stroke="#3cc83c" stroke-width="1"/><path d="M82.5 108.8V140.7M80.5 125.2H82.5M82.5 138.6H84.5" stroke="#3cc83c" stroke-width="1"/><path d="M86.5 119.1V157.6M84.5 150.7H86.5M86.5 147.1H88.5" stroke="#3cc83c" stroke-width="1"/><path d="M90.5 112.5V137.3M88.5 131.0H90.5M90.5 113.9H92.5" stroke="#3cc83c" stroke-width="1"/><path d="M94.5 106.1V129.9M92.5 111.5H94.5M94.5 127.0H96.5" stroke="#3cc83c" stroke-width="1"/><path d="M98.5 103.8V134.4M96.5 130.0H98.5M98.5 111.3H100.5" stroke="#3cc83c" stroke-width="1"/><path d="M102.5 91.0V109.9M100.5 99.0H102.5M102.5 104.5H104.5" stroke="#3cc83c" stroke-width="1"/><path d="M106.5 79.8V98.5M104.5 83.0H106.5M106.5 92.4H108.5" stroke="#3cc83c" stroke-width="1"/><path d="M110.5 78.7V99.4M108.5 79.3H110.5M110.5 93.8H112.5" stroke="#3cc83c" stroke-width="1"/><path d="M114.5 78.6V97.3M112.5 93.8H114.5M114.5 81.5H116.5" stroke="#3cc83c" stroke-width="1"/><path d="M118.5 79.1V98.6M116.5 86.6H118.5M118.5 79.9H120.5" stroke="#3cc83c" stroke-width="1"/><path d="M122.5 99.0V107.5M120.5 99.3H122.5M122.5 101.9H124.5" stroke="#3cc83c" stroke-width="1"/><path d="M126.5 82.8V100.2M124.5 84.8H126.5M126.5 88.7H128.5" stroke="#3cc83c" stroke-width="1"/><path d="M130.5 78.6V97.8M128.5 93.3H130.5M130.5 92.8H132.5" stroke="#3cc83c" stroke-width="1"/><path d="M134.5 81.2V98.8M132.5 96.4H134.5M134.5 93.6H136.5" stroke="#3cc83c" stroke-width="1"/><path d="M138.5 79.9V97.2M136.5 91.3H138.5M138.5 85.4H140.5" stroke="#3cc83c" stroke-width="1"/><path d="M142.5 78.8V97.8M140.5 95.5H142.5M142.5 81.2H144.5" stroke="#3cc83c" stroke-width="1"/><path d="M146.5 80.3V97.7M144.5 89.2H146.5M146.5 82.8H148.5" stroke="#3cc83c" stroke-width="1"/><path d="M150.5 81.4V97.3M148.5 91.0H150.5M150.5 88.1H152.5" stroke="#3cc83c" stroke-width="1"/><path d="M154.5 78.6V98.2M152.5 81.3H154.5M154.5 79.7H156.5" stroke="#3cc83c" stroke-width="1"/><path d="M158.5 78.6V97.0M156.5 80.4H158.5M158.5 90.3H160.5" stroke="#3cc83c" stroke-width="1"/><path d="M162.5 80.0V99.5M160.5 98.2H162.5M162.5 99.3H164.5" stroke="#3cc83c" stroke-width="1"/><path d="M166.5 79.2V97.8M164.5 83.9H166.5M166.5 90.2H168.5" stroke="#3cc83c" stroke-width="1"/><path d="M170.5 80.4V98.9M168.5 93.5H170.5M170.5 85.1H172.5" stroke="#3cc83c" stroke-width="1"/><path d="M174.5 79.8V98.1M172.5 79.9H174.5M174.5 80.4H176.5" stroke="#3cc83c" stroke-width="1"/><path d="M178.5 79.7V96.8M176.5 92.1H178.5M178.5 83.8H180.5" stroke="#3cc83c" stroke-width="1"/><path d="M182.5 96.3V107.5M180.5 98.9H182.5M182.5 98.7H184.5" stroke="#3cc83c" stroke-width="1"/><path d="M186.5 100.1V108.1M184.5 102.6H186.5M186.5 105.2H188.5" stroke="#3cc83c" stroke-width="1"/><path d="M190.5 81.6V100.5M188.5 99.8H190.5M190.5 95.4H192.5" stroke="#3cc83c" stroke-width="1"/><path d="M194.5 90.3V104.3M192.5 98.5H194.5M194.5 91.0H196.5" stroke="#3cc83c" stroke-width="1"/><path d="M198.5 94.8V107.1M196.5 97.0H198.5M198.5 95.9H200.5" stroke="#3cc83c" stroke-width="1"/><path d="M202.5 95.9V106.6M200.5 101.5H202.5M202.5 105.8H204.5" stroke="#3cc83c" stroke-width="1"/><path d="M206.5 95.3V106.4M204.5 106.2H206.5M206.5 99.4H208.5" stroke="#3cc83c" stroke-width="1"/><path d="M210.5 93.6V107.6M208.5 95.0H210.5M210.5 97.8H212.5" stroke="#3cc83c" stroke-width="1"/><path d="M214.5 99.5V116.6M212.5 99.8H214.5M214.5 107.2H216.5" stroke="#3cc83c" stroke-width="1"/><path d="M218.5 99.7V117.5M216.5 103.4H218.5M218.5 110.2H220.5" stroke="#3cc83c" stroke-width="1"/><path d="M222.5 98.7V142.6M220.5 115.1H222.5M222.5 139.8H224.5" stroke="#3cc83c" stroke-width="1"/><path d="M226.5 98.7V124.1M224.5 103.6H226.5M226.5 113.3H228.5" stroke="#3cc83c" stroke-width="1"/><path d="M230.5 99.7V117.3M228.5 112.9H230.5M230.5 106.6H232.5" stroke="#3cc83c" stroke-width="1"/><path d="M234.5 98.9V109.7M232.5 99.7H234.5M234.5 108.1H236.5" stroke="#3cc83c" stroke-width="1"/><path d="M238.5 100.4V114.9M236.5 110.4H238.5M238.5 100.8H240.5" stroke="#3cc83c" stroke-width="1"/><path d="M242.5 100.5V117.5M240.5 112.8H242.5M242.5 108.9H244.5" stroke="#3cc83c" stroke-width="1"/><path d="M246.5 99.6V116.9M244.5 113.4H246.5M246.5 104.2H248.5" stroke="#3cc83c" stroke-width="1"/><path d="M250.5 98.3V110.8M248.5 110.2H250.5M250.5 108.4H252.5" stroke="#3cc83c" stroke-width="1"/><path d="M254.5 99.3V109.3M252.5 102.3H254.5M254.5 101.6H256.5" stroke="#3cc83c" stroke-width="1"/><path d="M258.5 99.7V110.8M256.5 104.4H258.5M258.5 107.2H260.5" stroke="#3cc83c" stroke-width="1"/><path d="M262.5 96.9V114.9M260.5 111.6H262.5M262.5 98.6H264.5" stroke="#3cc83c" stroke-width="1"/><path d="M266.5 97.3V131.4M264.5 102.3H266.5M266.5 111.5H268.5" stroke="#3cc83c" stroke-width="1"/><path d="M270.5 95.7V110.3M268.5 108.7H270.5M270.5 110.1H272.5" stroke="#3cc83c" stroke-width="1"/><path d="M274.5 105.8V136.4M272.5 114.8H274.5M274.5 112.9H276.5" stroke="#3cc83c" stroke-width="1"/><path d="M278.5 117.4V148.2M276.5 130.9H278.5M278.5 133.5H280.5" stroke="#3cc83c" stroke-width="1"/><path d="M282.5 123.8V151.4M280.5 150.0H282.5M282.5 144.6H284.5" stroke="#3cc83c" stroke-width="1"/><path d="M286.5 120.4V146.3M284.5 138.9H286.5M286.5 127.1H288.5" stroke="#3cc83c" stroke-width="1"/><path d="M290.5 111.2V130.5M288.5 124.8H290.5M290.5 119.0H292.5" stroke="#3cc83c" stroke-width="1"/><path d="M294.5 95.9V110.2M292.5 104.1H294.5M294.5 97.9H296.5" stroke="#3cc83c" stroke-width="1"/><path d="M298.5 85.9V98.6M296.5 93.5H298.5M298.5 97.1H300.5" stroke="#3cc83c" stroke-width="1"/><path d="M302.5 84.0V98.2M300.5 90.9H302.5M302.5 89.8H304.5" stroke="#3cc83c" stroke-width="1"/><path d="M306.5 78.8V92.6M304.5 88.5H306.5M306.5 85.3H308.5" stroke="#3cc83c" stroke-width="1"/><path d="M310.5 74.5V82.6M308.5 80.6H310.5M310.5 79.8H312.5" stroke="#3cc83c" stroke-width="1"/><path d="M314.5 71.9V84.1M312.5 74.6H314.5M314.5 79.5H316.5" stroke="#3cc83c" stroke-width="1"/><path d="M318.5 76.1V94.9M316.5 94.4H318.5M318.5 88.0H320.5" stroke="#3cc83c" stroke-width="1"/><path d="M322.5 83.5V103.8M320.5 97.9H322.5M322.5 101.4H324.5" stroke="#3cc83c" stroke-width="1"/><path d="M326.5 94.2V108.6M324.5 94.4H326.5M326.5 107.8H328.5" stroke="#3cc83c" stroke-width="1"/><path d="M330.5 102.6V118.4M328.5 116.9H330.5M330.5 116.6H332.5" stroke="#3cc83c" stroke-width="1"/><path d="M334.5 101.2V117.2M332.5 113.5H334.5M334.5 104.4H336.5" stroke="#3cc83c" stroke-width="1"/><path d="M338.5 97.6V110.3M336.5 100.0H338.5M338.5 107.8H340.5" stroke="#3cc83c" stroke-width="1"/><path d="M342.5 95.0V110.3M340.5 101.7H342.5M342.5 98.9H344.5" stroke="#3cc83c" stroke-width="1"/><path d="M346.5 95.2V113.7M344.5 99.0H346.5M346.5 113.0H348.5" stroke="#3cc83c" stroke-width="1"/><path d="M350.5 89.5V114.0M348.5 101.4H350.5M350.5 110.0H352.5" stroke="#3cc83c" stroke-width="1"/><path d="M354.5 89.9V107.6M352.5 98.5H354.5M354.5 101.9H356.5" stroke="#3cc83c" stroke-width="1"/><path d="M358.5 82.6V104.3M356.5 93.5H358.5M358.5 83.2H360.5" stroke="#3cc83c" stroke-width="1"/><path d="M362.5 77.6V103.9M360.5 82.2H362.5M362.5 97.3H364.5" stroke="#3cc83c" stroke-width="1"/><path d="M366.5 79.4V103.5M364.5 95.6H366.5M366.5 98.3H368.5" stroke="#3cc83c" stroke-width="1"/><path d="M370.5 83.6V109.7M368.5 87.8H370.5M370.5 93.5H372.5" stroke="#3cc83c" stroke-width="1"/><path d="M374.5 84.1V112.5M372.5 84.4H374.5M374.5 100.0H376.5" stroke="#3cc83c" stroke-width="1"/><path d="M378.5 86.3V116.5M376.5 102.5H378.5M378.5 97.8H380.5" stroke="#3cc83c" stroke-width="1"/><path d="M382.5 83.3V117.4M380.5 93.8H382.5M382.5 105.4H384.5" stroke="#3cc83c" stroke-width="1"/><path d="M386.5 77.5V106.4M384.5 103.9H386.5M386.5 79.7H388.5" stroke="#3cc83c" stroke-width="1"/><path d="M390.5 84.0V102.0M388.5 95.6H390.5M390.5 98.3H392.5" stroke="#3cc83c" stroke-width="1"/><path d="M394.5 88.5V107.8M392.5 104.7H394.5M394.5 90.3H396.5" stroke="#3cc83c" stroke-width="1"/><path d="M398.5 88.4V109.7M396.5 99.7H398.5M398.5 106.5H400.5" stroke="#3cc83c" stroke-width="1"/><path d="M402.5 89.6V110.4M400.5 96.0H402.5M402.5 94.5H404.5" stroke="#3cc83c" stroke-width="1"/><path d="M406.5 90.2V106.2M404.5 94.7H406.5M406.5 105.5H408.5" stroke="#3cc83c" stroke-width="1"/><path d="M410.5 89.5V102.2M408.5 94.3H410.5M410.5 94.1H412.5" stroke="#3cc83c" stroke-width="1"/><path d="M414.5 91.0V106.2M412.5 97.9H414.5M414.5 93.5H416.5" stroke="#3cc83c" stroke-width="1"/><path d="M418.5 92.3V115.6M416.5 113.2H418.5M418.5 113.8H420.5" stroke="#3cc83c" stroke-width="1"/><path d="M422.5 91.0V107.4M420.5 106.3H422.5M422.5 96.3H424.5" stroke="#3cc83c" stroke-width="1"/><path d="M426.5 90.7V102.3M424.5 92.9H426.5M426.5 98.6H428.5" stroke="#3cc83c" stroke-width="1"/><path d="M430.5 85.9V102.7M428.5 99.2H430.5M430.5 89.8H432.5" stroke="#3cc83c" stroke-width="1"/><path d="M434.5 75.7V97.4M432.5 84.4H434.5M434.5 93.6H436.5" stroke="#3cc83c" stroke-width="1"/><path d="M438.5 63.3V85.6M436.5 84.0H438.5M438.5 74.5H440.5" stroke="#3cc83c" stroke-width="1"/><path d="M442.5 53.1V73.3M440.5 68.1H442.5M442.5 68.3H444.5" stroke="#3cc83c" stroke-width="1"/><path d="M446.5 38.5V74.4M444.5 65.6H446.5M446.5 73.7H448.5" stroke="#3cc83c" stroke-width="1"/><path d="M450.5 25.6V73.5M448.5 57.7H450.5M450.5 43.2H452.5" stroke="#3cc83c" stroke-width="1"/><path d="M454.5 21.1V69.0M452.5 67.0H454.5M454.5 38.0H456.5" stroke="#3cc83c" stroke-width="1"/><path d="M458.5 33.1V66.7M456.5 39.3H458.5M458.5 65.4H460.5" stroke="#3cc83c" stroke-width="1"/><path d="M462.5 37.6V61.1M460.5 45.9H462.5M462.5 46.1H464.5" stroke="#3cc83c" stroke-width="1"/><path d="M466.5 44.4V71.9M464.5 65.3H466.5M466.5 56.4H468.5" stroke="#3cc83c" stroke-width="1"/><path d="M470.5 34.5V70.5M468.5 64.5H470.5M470.5 48.5H472.5" stroke="#3cc83c" stroke-width="1"/><path d="M474.5 27.0V65.9M472.5 32.8H474.5M474.5 39.3H476.5" stroke="#3cc83c" stroke-width="1"/><path d="M478.5 34.4V57.5M476.5 37.7H478.5M478.5 39.1H480.5" stroke="#3cc83c" stroke-width="1"/><path d="M482.5 35.4V65.4M480.5 42.9H482.5M482.5 45.7H484.5" stroke="#3cc83c" stroke-width="1"/><path d="M486.5 42.9V74.2M484.5 62.0H486.5M486.5 53.4H488.5" stroke="#3cc83c" stroke-width="1"/><path d="M490.5 47.7V74.7M488.5 49.4H490.5M490.5 51.6H492.5" stroke="#3cc83c" stroke-width="1"/><path d="M494.5 44.1V73.7M492.5 67.1H494.5M494.5 48.0H496.5" stroke="#3cc83c" stroke-width="1"/><path d="M498.5 50.7V78.4M496.5 60.1H498.5M498.5 72.0H500.5" stroke="#3cc83c" stroke-width="1"/><path d="M502.5 61.0V78.4M500.5 78.4H502.5M502.5 67.8H504.5" stroke="#3cc83c" stroke-width="1"/><path d="M506.5 71.8V106.6M504.5 82.8H506.5M506.5 101.0H508.5" stroke="#3cc83c" stroke-width="1"/><path d="M510.5 73.4V124.0M508.5 100.7H510.5M510.5 123.3H512.5" stroke="#3cc83c" stroke-width="1"/><path d="M514.5 69.6V79.9M512.5 74.3H514.5M514.5 73.8H516.5" stroke="#3cc83c" stroke-width="1"/><path d="M518.5 62.4V74.9M516.5 63.8H518.5M518.5 74.8H520.5" stroke="#3cc83c" stroke-width="1"/><path d="M522.5 57.6V77.4M520.5 71.1H522.5M522.5 75.8H524.5" stroke="#3cc83c" stroke-width="1"/><path d="M526.5 59.5V80.0M524.5 75.9H526.5M526.5 59.7H528.5" stroke="#3cc83c" stroke-width="1"/><path d="M530.5 64.9V85.7M528.5 68.5H530.5M530.5 68.0H532.5" stroke="#3cc83c" stroke-width="1"/><path d="M534.5 75.0V85.7M532.5 85.3H534.5M534.5 81.9H536.5" stroke="#3cc83c" stroke-width="1"/><path d="M538.5 76.8V89.9M536.5 80.0H538.5M538.5 83.1H540.5" stroke="#3cc83c" stroke-width="1"/><path d="M542.5 74.9V93.9M540.5 84.5H542.5M542.5 76.1H544.5" stroke="#3cc83c" stroke-width="1"/><path d="M546.5 59.8V94.4M544.5 88.2H546.5M546.5 77.9H548.5" stroke="#3cc83c" stroke-width="1"/><path d="M550.5 61.2V94.9M548.5 65.9H550.5M550.5 77.8H552.5" stroke="#3cc83c" stroke-width="1"/><path d="M554.5 77.6V100.7M552.5 80.1H554.5M554.5 82.5H556.5" stroke="#3cc83c" stroke-width="1"/><path d="M558.5 84.4V104.5M556.5 92.0H558.5M558.5 96.9H560.5" stroke="#3cc83c" stroke-width="1"/><path d="M562.5 87.3V108.0M560.5 102.1H562.5M562.5 97.8H564.5" stroke="#3cc83c" stroke-width="1"/><path d="M566.5 78.8V104.0M564.5 81.4H566.5M566.5 99.4H568.5" stroke="#3cc83c" stroke-width="1"/><path d="M570.5 64.6V95.4M568.5 76.2H570.5M570.5 73.8H572.5" stroke="#3cc83c" stroke-width="1"/><path d="M574.5 61.7V86.0M572.5 71.4H574.5M574.5 81.1H576.5" stroke="#3cc83c" stroke-width="1"/><path d="M578.5 60.2V82.1M576.5 70.5H578.5M578.5 66.4H580.5" stroke="#3cc83c" stroke-width="1"/><path d="M582.5 60.3V84.6M580.5 65.9H582.5M582.5 77.4H584.5" stroke="#3cc83c" stroke-width="1"/><path d="M586.5 67.5V90.6M584.5 68.2H586.5M586.5 80.2H588.5" stroke="#3cc83c" stroke-width="1"/><path d="M590.5 77.1V103.5M588.5 92.4H590.5M590.5 94.1H592.5" stroke="#3cc83c" stroke-width="1"/><path d="M594.5 81.5V100.0M592.5 94.5H594.5M594.5 90.3H596.5" stroke="#3cc83c" stroke-width="1"/><path d="M598.5 81.1V103.3M596.5 99.4H598.5M598.5 99.7H600.5" stroke="#3cc83c" stroke-width="1"/><path d="M602.5 91.0V112.4M600.5 95.2H602.5M602.5 93.4H604.5" stroke="#3cc83c" stroke-width="1"/><path d="M606.5 90.9V112.6M604.5 95.0H606.5M606.5 111.7H608.5" stroke="#3cc83c" stroke-width="1"/><path d="M610.5 87.2V100.4M608.5 93.3H610.5M610.5 91.1H612.5" stroke="#3cc83c" stroke-width="1"/><path d="M614.5 77.8V98.2M612.5 92.1H614.5M614.5 83.4H616.5" stroke="#3cc83c" stroke-width="1"/><path d="M618.5 73.8V94.0M616.5 82.1H618.5M618.5 82.2H620.5" stroke="#3cc83c" stroke-width="1"/><path d="M622.5 72.7V89.1M620.5 83.5H622.5M622.5 74.7H624.5" stroke="#3cc83c" stroke-width="1"/><path d="M626.5 75.6V89.2M624.5 88.0H626.5M626.5 78.5H628.5" stroke="#3cc83c" stroke-width="1"/><path d="M630.5 81.4V95.7M628.5 87.0H630.5M630.5 88.9H632.5" stroke="#3cc83c" stroke-width="1"/><path d="M634.5 87.4V102.1M632.5 98.8H634.5M634.5 97.6H636.5" stroke="#3cc83c" stroke-width="1"/><path d="M638.5 87.7V107.8M636.5 96.9H638.5M638.5 94.7H640.5" stroke="#3cc83c" stroke-width="1"/><path d="M642.5 83.0V104.3M640.5 87.1H642.5M642.5 93.1H644.5" stroke="#3cc83c" stroke-width="1"/><path d="M646.5 80.2V101.0M644.5 92.1H646.5M646.5 86.6H648.5" stroke="#3cc83c" stroke-width="1"/><path d="M650.5 82.0V103.3M648.5 100.3H650.5M650.5 86.7H652.5" stroke="#3cc83c" stroke-width="1"/><path d="M4 68.5H654" stroke="#88c088" stroke-width="1" stroke-dasharray="3.5 2.5"/><path d="M4 73.5H654" stroke="#a0a0a0" stroke-width="1"/><rect x="3.5" y="3.5" width="651" height="166.0" fill="none" stroke="#fff" stroke-width="1"/><path d="M654 7.5H660" stroke="#fff" stroke-width="1"/><path d="M654 39.5H660" stroke="#fff" stroke-width="1"/><rect x="657" y="66.5" width="37" height="13.5" fill="#98a4b2"/><path d="M654 73.5H660" stroke="#fff" stroke-width="1"/><path d="M654 104.5H660" stroke="#fff" stroke-width="1"/><path d="M654 137.5H660" stroke="#fff" stroke-width="1"/><path d="M3.5 169V173 M131.5 169V173 M259.5 169V173 M387.5 169V173 M515.5 169V173 M643.5 169V173" stroke="#fff" stroke-width="1"/></svg>
<div class="t" style="left:1104.5px;top:321.00px;font-size:13px;line-height:13px;color:#fff;font-weight:normal;">0.8688</div>
<div class="t" style="left:1104.5px;top:353.00px;font-size:13px;line-height:13px;color:#fff;font-weight:normal;">0.8676</div>
<div class="t" style="left:1104.5px;top:387.00px;font-size:13px;line-height:13px;color:#0c0c18;font-weight:normal;">0.8664</div>
<div class="t" style="left:1104.5px;top:418.00px;font-size:13px;line-height:13px;color:#fff;font-weight:normal;">0.8651</div>
<div class="t" style="left:1104.5px;top:451.00px;font-size:13px;line-height:13px;color:#fff;font-weight:normal;">0.8638</div>
<div class="t" style="left:447px;top:493.50px;font-size:13px;line-height:13px;color:#fff;font-weight:normal;">16 Oct 2024</div>
<div class="t" style="left:575px;top:493.50px;font-size:13px;line-height:13px;color:#fff;font-weight:normal;">18 Oct 02:00</div>
<div class="t" style="left:703px;top:493.50px;font-size:13px;line-height:13px;color:#fff;font-weight:normal;">21 Oct 10:00</div>
<div class="t" style="left:831px;top:493.50px;font-size:13px;line-height:13px;color:#fff;font-weight:normal;">22 Oct 18:00</div>
<div class="t" style="left:959px;top:493.50px;font-size:13px;line-height:13px;color:#fff;font-weight:normal;">24 Oct 02:00</div>
<div class="t" style="left:1087px;top:493.50px;font-size:13px;line-height:13px;color:#fff;font-weight:normal;">25 Oct 10:00</div>
<div class="r" style="left:453px;top:329px;width:18px;height:14px;background:transparent"></div>
<svg class="r" style="left:452px;top:329px;" width="21" height="15" viewBox="0 0 21 15"><rect x="1.5" y="1.5" width="8.5" height="11.5" fill="#f4a898"/><rect x="10" y="1.5" width="9" height="11.5" fill="#acd4f8"/><rect x="1.5" y="1.5" width="17.5" height="11.5" fill="none" stroke="#fff" stroke-width="1"/><path d="M3.5 4.5H8.5M3.5 7.5H8.5M3.5 10.5H8.5" stroke="#d84838" stroke-width="1.2"/><path d="M11.5 4.5H17M11.5 7.5H17M11.5 10.5H17" stroke="#2a70b8" stroke-width="1.2"/></svg>
<svg class="r" style="left:479px;top:328px;" width="22" height="17" viewBox="0 0 22 17"><path d="M2 3H8V7.5H10V15H2Z" fill="#f4b4a4"/><path d="M13.5 3H20V15H11.5V9H13.5Z" fill="#a8d0f8"/><rect x="8.5" y="1.5" width="6" height="3" rx="1.5" fill="#d8d8d8"/></svg>
<div class="t" style="left:507px;top:331.00px;font-size:13px;line-height:13px;color:#fff;font-weight:normal;transform:scaleX(0.9);transform-origin:0 0;">USDCHF, H1:&nbsp; US Dollar vs Swiss Franc</div>
<div class="r" style="left:451px;top:350px;width:59px;height:27px;background:linear-gradient(180deg,#4a54f0,#2a2ad2)"></div>
<div class="r" style="left:643px;top:350px;width:59px;height:27px;background:linear-gradient(180deg,#4a54f0,#2a2ad2)"></div>
<div class="r" style="left:455px;top:376px;width:52px;height:1px;background:#8890ff"></div>
<div class="r" style="left:646px;top:376px;width:52px;height:1px;background:#8890ff"></div>
<div class="t" style="left:465px;top:355.80px;font-size:15px;line-height:15px;color:#e0e4ff;font-weight:normal;transform:scaleX(0.84);transform-origin:0 0;">SELL</div>
<div class="t" style="left:658px;top:355.80px;font-size:15px;line-height:15px;color:#e0e4ff;font-weight:normal;transform:scaleX(0.93);transform-origin:0 0;">BUY</div>
<div class="r" style="left:510px;top:350px;width:133px;height:26px;background:#000"></div>
<div class="r" style="left:513px;top:350.5px;width:24px;height:24px;background:linear-gradient(180deg,#f4f4f4,#dadada)"></div>
<div class="r" style="left:537px;top:350.5px;width:78px;height:24px;background:#fff"></div>
<div class="r" style="left:616px;top:350.5px;width:24px;height:24px;background:linear-gradient(180deg,#f4f4f4,#dadada)"></div>
<svg class="r" style="left:520px;top:360px;" width="10" height="6" viewBox="0 0 10 6"><path d="M0 0H10L5 5Z" fill="#000"/></svg>
<svg class="r" style="left:623px;top:359px;" width="10" height="6" viewBox="0 0 10 6"><path d="M0 5H10L5 0Z" fill="#000"/></svg>
<div class="t" style="right:530px;top:356.15px;font-size:14px;line-height:14px;color:#000;font-weight:normal;">0.01</div>
<div class="r" style="left:451px;top:377px;width:125px;height:46px;background:linear-gradient(180deg,#3c46e8 0%,#2020c8 50%,#1010a0 100%)"></div>
<div class="r" style="left:578px;top:377px;width:124px;height:46px;background:linear-gradient(180deg,#3c46e8 0%,#2020c8 50%,#1010a0 100%)"></div>
<div class="t" style="left:472px;top:400.80px;font-size:15px;line-height:15px;color:#fff;font-weight:bold;">0.86</div>
<div class="t" style="left:505px;top:382.18px;font-size:37px;line-height:37px;color:#fff;font-weight:normal;">63</div>
<div class="t" style="left:549px;top:385.65px;font-size:14px;line-height:14px;color:#fff;font-weight:bold;">0</div>
<div class="t" style="left:597px;top:400.80px;font-size:15px;line-height:15px;color:#fff;font-weight:bold;">0.86</div>
<div class="t" style="left:633px;top:382.18px;font-size:37px;line-height:37px;color:#fff;font-weight:normal;">64</div>
<div class="t" style="left:676px;top:385.65px;font-size:14px;line-height:14px;color:#fff;font-weight:bold;">6</div>
<svg class="r" style="left:1080px;top:383px;" width="22" height="22" viewBox="0 0 22 22"><circle cx="11" cy="11" r="8.8" fill="#9a8a78"/><path d="M11.5 4.5 L17.5 10.5 H14 V14.5 H9 V10.5 H5.5 Z" fill="#1a6ac8" stroke="#fff" stroke-width="1.2"/></svg>
<div class="r" style="left:437px;top:519px;width:701px;height:2px;background:#5a5a5a"></div>
<div class="r" style="left:435px;top:46px;width:2px;height:475px;background:#646464"></div>
<div class="r" style="left:436px;top:521px;width:1px;height:26px;background:#404040"></div>
<div class="r" style="left:437px;top:521px;width:701px;height:27px;background:#f0f0f0"></div>
<div class="r" style="left:437px;top:523px;width:112px;height:24px;background:#ececec;border-top:1px solid #383838;border-right:1px solid #383838;box-sizing:border-box"></div>
<div class="t" style="left:455px;top:528.30px;font-size:15px;line-height:15px;color:#707070;font-weight:normal;transform:scaleX(0.9);transform-origin:0 0;">EURUSD,H1</div>
<div class="r" style="left:548px;top:521px;width:108px;height:26px;background:#fff;border:1px solid #000;border-top:none;box-sizing:border-box"></div>
<div class="t" style="left:563px;top:528.30px;font-size:15px;line-height:15px;color:#000;font-weight:normal;transform:scaleX(0.91);transform-origin:0 0;">USDCHF,H1</div>
<div class="t" style="left:672px;top:528.30px;font-size:15px;line-height:15px;color:#707070;font-weight:normal;transform:scaleX(0.906);transform-origin:0 0;">GBPUSD,H1</div>
<div class="r" style="left:765px;top:526px;width:1px;height:18px;background:#a0a0a0"></div>
<div class="t" style="left:780px;top:528.30px;font-size:15px;line-height:15px;color:#707070;font-weight:normal;transform:scaleX(0.91);transform-origin:0 0;">USDJPY,H1</div>
<div class="r" style="left:437px;top:547px;width:701px;height:1px;background:#d0d0d0"></div>
<div class="r" style="left:0px;top:548px;width:1138px;height:95px;background:#f0f0f0"></div>
<div class="r" style="left:0px;top:547px;width:437px;height:1px;background:#c8c8c8"></div>
<svg class="r" style="left:3px;top:554px;" width="12" height="12" viewBox="0 0 12 12"><path d="M1.5 1.5 L10.5 10.5 M10.5 1.5 L1.5 10.5" stroke="#000" stroke-width="1.8"/></svg>
<div class="r" style="left:0px;top:572px;width:18px;height:71px;background:#dfe7f0"></div>
<div class="r" style="left:18px;top:553px;width:1120px;height:90px;background:#fff"></div>
<div class="r" style="left:18px;top:553px;width:1120px;height:1px;background:#a0a0a0"></div>
<div class="r" style="left:18px;top:553px;width:1px;height:90px;background:#a0a0a0"></div>
<div class="r" style="left:245px;top:554px;width:1px;height:26px;background:#e0e0e0"></div>
<div class="r" style="left:402px;top:554px;width:1px;height:26px;background:#e0e0e0"></div>
<div class="r" style="left:577px;top:554px;width:1px;height:26px;background:#e0e0e0"></div>
<div class="r" style="left:752px;top:554px;width:1px;height:26px;background:#e0e0e0"></div>
<div class="r" style="left:927px;top:554px;width:1px;height:26px;background:#e0e0e0"></div>
<div class="r" style="left:1102px;top:554px;width:1px;height:26px;background:#e0e0e0"></div>
<div class="t" style="left:25px;top:561.30px;font-size:15px;line-height:15px;color:#000;font-weight:normal;">Symbol</div>
<svg class="r" style="left:93px;top:563px;" width="11" height="7" viewBox="0 0 11 7"><path d="M0 6H10L5 0Z" fill="#000"/></svg>
<div class="t" style="right:567px;top:561.30px;font-size:15px;line-height:15px;color:#000;font-weight:normal;">Time</div>
<div class="t" style="right:392px;top:561.30px;font-size:15px;line-height:15px;color:#000;font-weight:normal;">Type</div>
<div class="t" style="right:217px;top:561.30px;font-size:15px;line-height:15px;color:#000;font-weight:normal;">Volume</div>
<div class="t" style="right:40px;top:561.30px;font-size:15px;line-height:15px;color:#000;font-weight:normal;">Price</div>
<div class="r" style="left:19px;top:580px;width:1119px;height:24px;background:#0078d7"></div>
<div class="r" style="left:245px;top:580px;width:1px;height:24px;background:#5aa8e8"></div>
<div class="r" style="left:402px;top:580px;width:1px;height:24px;background:#5aa8e8"></div>
<div class="r" style="left:577px;top:580px;width:1px;height:24px;background:#5aa8e8"></div>
<div class="r" style="left:752px;top:580px;width:1px;height:24px;background:#5aa8e8"></div>
<div class="r" style="left:927px;top:580px;width:1px;height:24px;background:#5aa8e8"></div>
<div class="r" style="left:1102px;top:580px;width:1px;height:24px;background:#5aa8e8"></div>
<svg class="r" style="left:24px;top:584px;" width="14" height="16" viewBox="0 0 14 16"><rect x="1" y="0.5" width="11" height="14" rx="2" fill="#fff"/><path d="M4 4H8M4 7H8" stroke="#0078d7" stroke-width="1.3"/></svg>
<div class="t" style="left:46px;top:584.30px;font-size:15px;line-height:15px;color:#fff;font-weight:normal;">usdchf</div>
<div class="t" style="left:251px;top:584.30px;font-size:15px;line-height:15px;color:#fff;font-weight:normal;transform:scaleX(0.93);transform-origin:0 0;">192789692</div>
<div class="t" style="right:566px;top:584.30px;font-size:15px;line-height:15px;color:#fff;font-weight:normal;transform:scaleX(0.935);transform-origin:100% 0;">2024.10.25 11:07:12</div>
<div class="t" style="right:391px;top:584.30px;font-size:15px;line-height:15px;color:#fff;font-weight:normal;">buy</div>
<div class="t" style="right:217px;top:584.30px;font-size:15px;line-height:15px;color:#fff;font-weight:normal;">1</div>
<div class="t" style="right:41px;top:584.30px;font-size:15px;line-height:15px;color:#fff;font-weight:normal;transform:scaleX(0.95);transform-origin:100% 0;">0.86649</div>
<div class="r" style="left:19px;top:604px;width:1119px;height:26px;background:#c8c8c8"></div>
<svg class="r" style="left:22px;top:609px;" width="16" height="16" viewBox="0 0 16 16"><circle cx="8" cy="8" r="6.5" fill="none" stroke="#202020" stroke-width="1.5"/><path d="M4.5 8H11.5" stroke="#202020" stroke-width="1.6"/></svg>
<div class="t" style="left:46px;top:610.30px;font-size:15px;line-height:15px;color:#000;font-weight:bold;">Balance: 100 000.00 USD&nbsp; Equity: 99 978.07&nbsp; Margin: 200.00&nbsp; Free Margin: 99 778.07&nbsp; Margin Level: 49 989.04 %</div>
<div class="r" style="left:113px;top:53px;width:258px;height:542px;background:#f0f0f0;border:1px solid #a0a0a0;box-sizing:border-box;box-shadow:2px 2px 3px rgba(0,0,0,0.35)"></div>
<div class="t" style="left:152px;top:63.30px;font-size:15px;line-height:15px;color:#000;font-weight:normal;">New Order</div>
<div class="t" style="right:775px;top:63.30px;font-size:15px;line-height:15px;color:#000;font-weight:normal;">F9</div>
<svg class="r" style="left:125px;top:60px;" width="18" height="22" viewBox="0 0 18 22"><path d="M2.5 3.5 Q2.5 1.5 4.5 1.5 H12.5 Q14.5 1.5 14.5 3.5 V15.5 L10.5 19.5 H4.5 Q2.5 19.5 2.5 17.5 Z" fill="#fff" stroke="#1e5888" stroke-width="1.5" stroke-linejoin="round"/><path d="M10.5 19.5 V16.5 Q10.5 15.5 11.5 15.5 H14.5 Z" fill="#1e5888" stroke="#1e5888" stroke-width="1"/><path d="M8.5 5.5 V13.5 M4.5 9.5 H12.5" stroke="#1e5888" stroke-width="1.4"/></svg>
<div class="t" style="left:152px;top:92.30px;font-size:15px;line-height:15px;color:#000;font-weight:normal;">Close Position</div>
<svg class="r" style="left:124px;top:95px;" width="16" height="9" viewBox="0 0 16 9"><path d="M2.3 1.2 L8.4 7.3 L14.4 1.2" stroke="#2a9a3a" stroke-width="1.7" fill="none"/></svg>
<div class="r" style="left:116px;top:114px;width:252px;height:29px;background:#0078d7"></div>
<div class="t" style="left:152px;top:121.30px;font-size:15px;line-height:15px;color:#fff;font-weight:normal;">Modify or Delete</div>
<svg class="r" style="left:123.6px;top:119.5px;" width="20" height="20" viewBox="0 0 20 20"><circle cx="10" cy="10" r="5.2" fill="none" stroke="#c4e2ff" stroke-width="2.2"/><circle cx="10.00" cy="3.70" r="1.9" fill="#c4e2ff"/><circle cx="15.46" cy="6.85" r="1.9" fill="#c4e2ff"/><circle cx="15.46" cy="13.15" r="1.9" fill="#c4e2ff"/><circle cx="10.00" cy="16.30" r="1.9" fill="#c4e2ff"/><circle cx="4.54" cy="13.15" r="1.9" fill="#c4e2ff"/><circle cx="4.54" cy="6.85" r="1.9" fill="#c4e2ff"/></svg>
<div class="r" style="left:117px;top:148px;width:250px;height:1px;background:#c8c8c8"></div>
<div class="t" style="left:152px;top:162.30px;font-size:15px;line-height:15px;color:#000;font-weight:normal;">Bulk Operations</div>
<svg class="r" style="left:355px;top:163px;" width="6" height="9" viewBox="0 0 6 9"><path d="M0 0L5.5 4.5L0 9Z" fill="#000"/></svg>
<div class="r" style="left:117px;top:189px;width:250px;height:1px;background:#c8c8c8"></div>
<div class="t" style="left:152px;top:203.30px;font-size:15px;line-height:15px;color:#000;font-weight:normal;">Depth of Market</div>
<div class="t" style="right:775px;top:203.30px;font-size:15px;line-height:15px;color:#000;font-weight:normal;">B</div>
<svg class="r" style="left:123px;top:204px;" width="21" height="15" viewBox="0 0 21 15"><rect x="1" y="1" width="19" height="13" fill="#fde0e0" stroke="#e05050" stroke-width="1.2"/><rect x="10.5" y="1" width="9.5" height="13" fill="#dbeafa" stroke="#3a80c8" stroke-width="1.2"/><path d="M3 4.5H9M3 7.5H9M3 10.5H9" stroke="#e05050" stroke-width="1.3"/><path d="M12 4.5H18M12 7.5H18M12 10.5H18" stroke="#3a80c8" stroke-width="1.3"/></svg>
<div class="t" style="left:152px;top:232.30px;font-size:15px;line-height:15px;color:#000;font-weight:normal;">Open Chart</div>
<div class="t" style="right:775px;top:232.30px;font-size:15px;line-height:15px;color:#000;font-weight:normal;">Space</div>
<svg class="r" style="left:122px;top:230px;" width="22" height="22" viewBox="0 0 22 22"><path d="M2 1 V20 H21" stroke="#b8b8b8" stroke-width="1.8" fill="none"/><path d="M4 11 L9 6 L14 11 L20 6" stroke="#2a6ca6" stroke-width="1.8" fill="none"/></svg>
<div class="r" style="left:117px;top:259px;width:250px;height:1px;background:#c8c8c8"></div>
<div class="t" style="left:152px;top:273.30px;font-size:15px;line-height:15px;color:#000;font-weight:normal;">Trailing Stop</div>
<svg class="r" style="left:355px;top:274px;" width="6" height="9" viewBox="0 0 6 9"><path d="M0 0L5.5 4.5L0 9Z" fill="#000"/></svg>
<div class="t" style="left:152px;top:302.30px;font-size:15px;line-height:15px;color:#000;font-weight:normal;">Volumes</div>
<svg class="r" style="left:355px;top:303px;" width="6" height="9" viewBox="0 0 6 9"><path d="M0 0L5.5 4.5L0 9Z" fill="#000"/></svg>
<div class="t" style="left:152px;top:331.30px;font-size:15px;line-height:15px;color:#000;font-weight:normal;">Profit</div>
<svg class="r" style="left:355px;top:332px;" width="6" height="9" viewBox="0 0 6 9"><path d="M0 0L5.5 4.5L0 9Z" fill="#000"/></svg>
<div class="r" style="left:117px;top:358px;width:250px;height:1px;background:#c8c8c8"></div>
<div class="t" style="left:152px;top:372.30px;font-size:15px;line-height:15px;color:#000;font-weight:normal;">Report</div>
<svg class="r" style="left:355px;top:373px;" width="6" height="9" viewBox="0 0 6 9"><path d="M0 0L5.5 4.5L0 9Z" fill="#000"/></svg>
<div class="t" style="left:152px;top:401.30px;font-size:15px;line-height:15px;color:#000;font-weight:normal;">Show on Charts</div>
<svg class="r" style="left:355px;top:402px;" width="6" height="9" viewBox="0 0 6 9"><path d="M0 0L5.5 4.5L0 9Z" fill="#000"/></svg>
<div class="t" style="left:152px;top:430.30px;font-size:15px;line-height:15px;color:#000;font-weight:normal;">Register as Signal</div>
<svg class="r" style="left:122px;top:431px;" width="24" height="14" viewBox="0 0 24 14"><path d="M4 1 Q1 7 4 13 M20 1 Q23 7 20 13 M7 3.5 Q5.5 7 7 10.5 M17 3.5 Q18.5 7 17 10.5" stroke="#2a6ca6" stroke-width="1.5" fill="none"/><circle cx="12" cy="7" r="2" fill="#2a6ca6"/></svg>
<div class="r" style="left:117px;top:457px;width:250px;height:1px;background:#c8c8c8"></div>
<div class="t" style="left:152px;top:471.30px;font-size:15px;line-height:15px;color:#000;font-weight:normal;">Show Milliseconds</div>
<div class="t" style="left:152px;top:500.30px;font-size:15px;line-height:15px;color:#000;font-weight:normal;">Auto Arrange</div>
<div class="t" style="right:775px;top:500.30px;font-size:15px;line-height:15px;color:#000;font-weight:normal;">A</div>
<svg class="r" style="left:122px;top:502px;" width="12" height="11" viewBox="0 0 12 11"><path d="M1.5 5.5 L4.5 9 L10.5 1.5" stroke="#000" stroke-width="2" fill="none"/></svg>
<div class="t" style="left:152px;top:529.30px;font-size:15px;line-height:15px;color:#000;font-weight:normal;">Grid</div>
<div class="t" style="right:775px;top:529.30px;font-size:15px;line-height:15px;color:#000;font-weight:normal;">G</div>
<svg class="r" style="left:122px;top:531px;" width="12" height="11" viewBox="0 0 12 11"><path d="M1.5 5.5 L4.5 9 L10.5 1.5" stroke="#000" stroke-width="2" fill="none"/></svg>
<div class="r" style="left:117px;top:556px;width:250px;height:1px;background:#c8c8c8"></div>
<div class="t" style="left:152px;top:570.30px;font-size:15px;line-height:15px;color:#000;font-weight:normal;">Columns</div>
<svg class="r" style="left:355px;top:571px;" width="6" height="9" viewBox="0 0 6 9"><path d="M0 0L5.5 4.5L0 9Z" fill="#000"/></svg>
<svg class="r" style="left:52px;top:88px;" width="376" height="82" viewBox="0 0 376 82"><rect x="6.7" y="7.5" width="361.8" height="68.3" rx="8" fill="none" stroke="#e84848" stroke-width="5"/></svg>
</body></html>
